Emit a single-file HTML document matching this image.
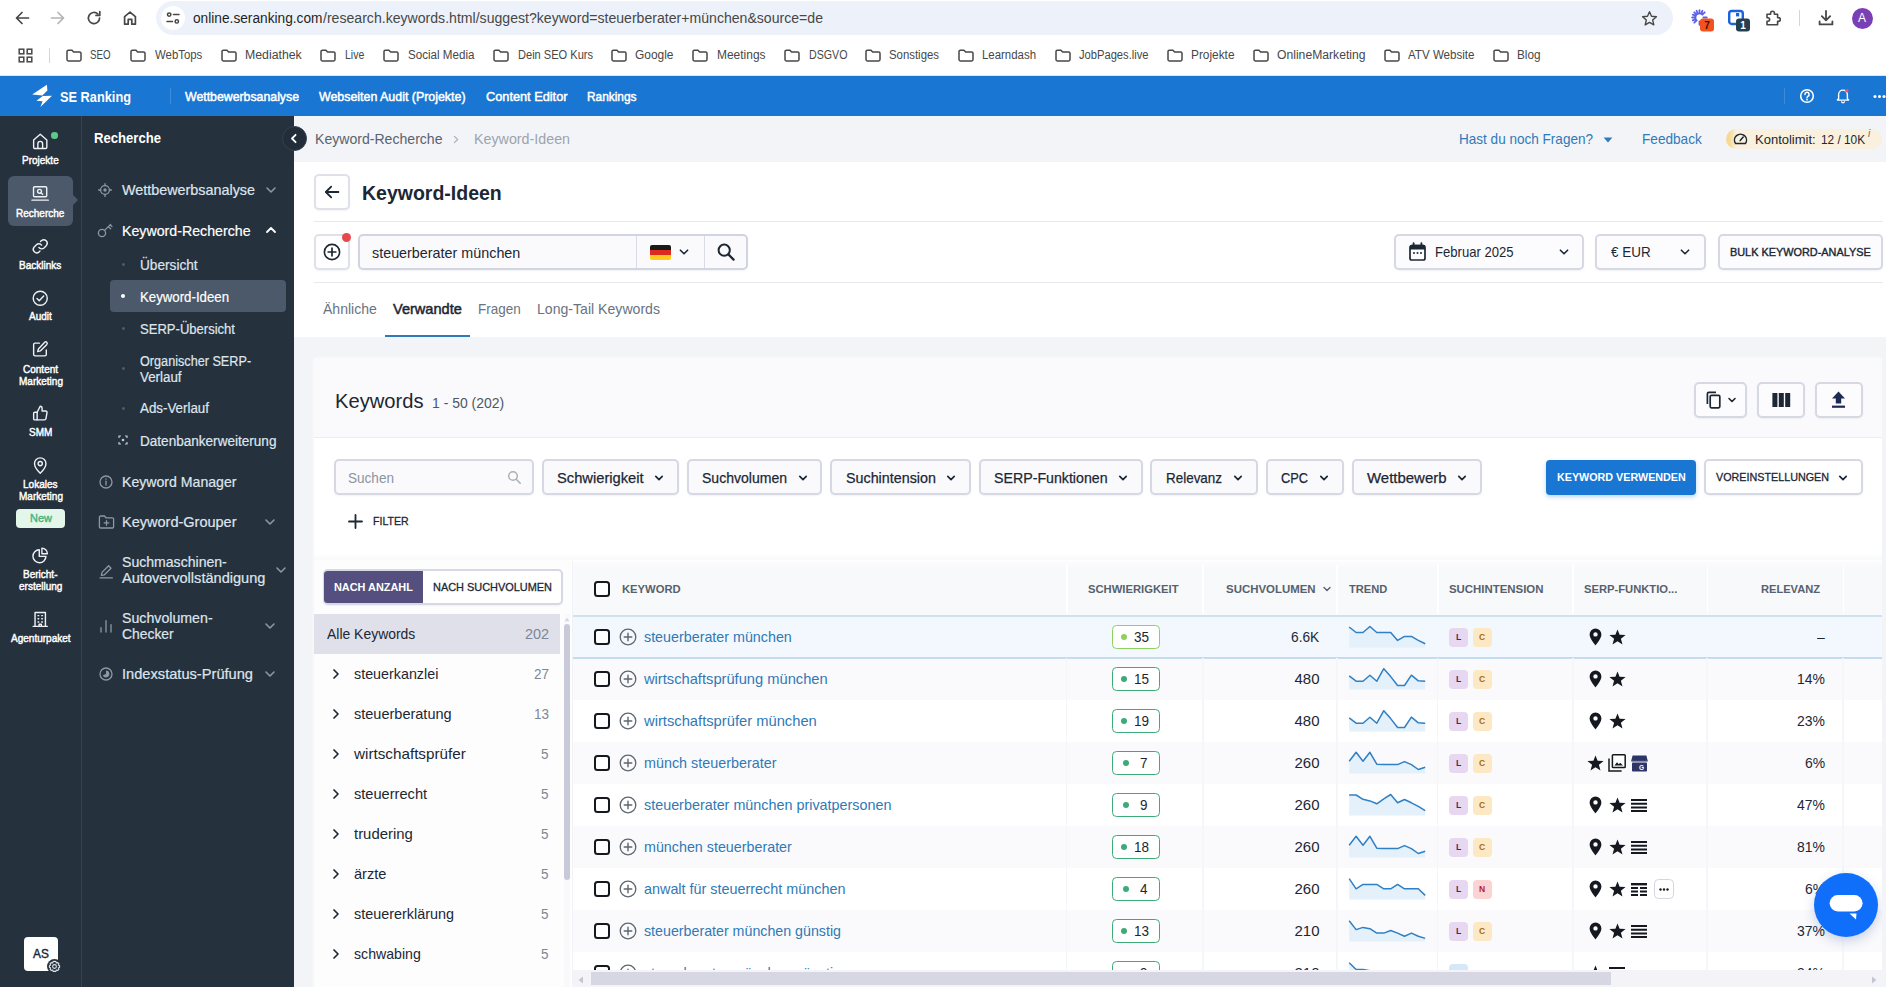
<!DOCTYPE html>
<html lang="de"><head><meta charset="utf-8"><title>Keyword-Ideen – SE Ranking</title><style>
*{box-sizing:border-box;margin:0;padding:0}
html,body{width:1886px;height:987px;overflow:hidden;background:#f3f4f7;font-family:"Liberation Sans",sans-serif;}
body{position:relative}
.t{position:absolute;white-space:nowrap;transform-origin:0 50%;display:block}
svg{display:block;overflow:visible}
.abs{position:absolute}
</style></head><body>
<header id="browser"><div style="position:absolute;left:0px;top:0px;width:1886px;height:76px;background:#ffffff;"></div><div style="position:absolute;left:0px;top:75px;width:1886px;height:1px;background:#dde6f5;"></div><div style="position:absolute;left:156px;top:1px;width:1516.5px;height:34px;background:#edf2fa;border-radius:17px;"></div><div style="position:absolute;left:161px;top:6px;width:24px;height:24px;background:#ffffff;border-radius:12px;"></div><svg style="position:absolute;left:14px;top:10px;" width="16" height="16" viewBox="0 0 16 16"><path d="M14.5 8H2.5M8 2.5L2.5 8L8 13.5" fill="none" stroke="#474747" stroke-width="1.7" stroke-linecap="round" stroke-linejoin="round"/></svg><svg style="position:absolute;left:50px;top:10px;" width="16" height="16" viewBox="0 0 16 16"><path d="M1.5 8H13.5M8 2.5L13.5 8L8 13.5" fill="none" stroke="#b4b4b4" stroke-width="1.7" stroke-linecap="round" stroke-linejoin="round"/></svg><svg style="position:absolute;left:86px;top:10px;" width="16" height="16" viewBox="0 0 16 16"><path d="M13.6 8A5.6 5.6 0 1 1 11.9 4" fill="none" stroke="#474747" stroke-width="1.7" stroke-linecap="round"/><path d="M13.8 1.6V5.4H10" fill="none" stroke="#474747" stroke-width="1.7" stroke-linecap="round" stroke-linejoin="round"/></svg><svg style="position:absolute;left:122px;top:10px;" width="16" height="16" viewBox="0 0 16 16"><path d="M2.6 14.2V6.6L8 2.2L13.4 6.6V14.2H9.8V9.4H6.2V14.2Z" fill="none" stroke="#474747" stroke-width="1.7" stroke-linejoin="round"/></svg><svg style="position:absolute;left:166px;top:11px;" width="14" height="14" viewBox="0 0 14 14"><g fill="none" stroke="#474747" stroke-width="1.5" stroke-linecap="round"><circle cx="3.2" cy="3.6" r="1.7"/><path d="M7.5 3.6H13"/><circle cx="10.8" cy="10.4" r="1.7"/><path d="M1 10.4H6.5"/></g></svg><span class="t" style="left:193.00px;top:11.15px;font-size:14px;line-height:14px;font-weight:400;color:#1f1f1f;transform:scaleX(0.9789);">online.seranking.com</span><span class="t" style="left:322.50px;top:11.15px;font-size:14px;line-height:14px;font-weight:400;color:#474747;transform:scaleX(1.0063);">/research.keywords.html/suggest?keyword=steuerberater+münchen&amp;source=de</span><svg style="position:absolute;left:1641px;top:10px;" width="17" height="17" viewBox="0 0 17 17"><path d="M8.5 1.8L10.5 6.3L15.4 6.8L11.7 10.1L12.8 14.9L8.5 12.4L4.2 14.9L5.3 10.1L1.6 6.8L6.5 6.3Z" fill="none" stroke="#474747" stroke-width="1.4" stroke-linejoin="round"/></svg><svg style="position:absolute;left:1691px;top:8px;" width="24" height="24" viewBox="0 0 24 24"><g stroke="#5b5fe8" stroke-width="1.8" stroke-linecap="round"><path d="M8.5 2.2V5.6M8.5 13.4V16.8M1.2 9.5H4.6M12.4 9.5H15.8M3.3 4.3L5.7 6.7M13.7 4.3L11.3 6.7M3.3 14.7L5.7 12.3M5.6 2.8L6.9 5.9M11.4 2.8L10.1 5.9M1.8 6.6L4.9 7.9M1.8 12.4L4.9 11.1"/></g><rect x="9" y="10.5" width="14" height="13" rx="3" fill="#f4511e"/></svg><span class="t" style="left:1704.22px;top:20.54px;font-size:10px;line-height:10px;font-weight:700;color:#3a1208;">7</span><svg style="position:absolute;left:1727px;top:8px;" width="24" height="24" viewBox="0 0 24 24"><rect x="2.2" y="3" width="13.6" height="13" rx="2.5" fill="#fff" stroke="#1c62d8" stroke-width="2.4"/><rect x="9" y="5" width="3.2" height="3.4" fill="#1c62d8"/><rect x="9" y="10.5" width="14" height="13" rx="3" fill="#24404f"/></svg><span class="t" style="left:1740.22px;top:20.54px;font-size:10px;line-height:10px;font-weight:700;color:#ffffff;">1</span><svg style="position:absolute;left:1764px;top:9px;" width="18" height="18" viewBox="0 0 18 18"><path d="M3 5.2H6.6V4.2A1.9 1.9 0 0 1 10.4 4.2V5.2H13.6V8.6H14.4A1.9 1.9 0 0 1 14.4 12.4H13.6V15.8H3V12.2H3.9A1.7 1.7 0 0 0 3.9 8.8H3Z" fill="none" stroke="#474747" stroke-width="1.6" stroke-linejoin="round"/></svg><div style="position:absolute;left:1798.5px;top:10px;width:1.5px;height:16px;background:#c7d7f2;"></div><svg style="position:absolute;left:1817px;top:9px;" width="18" height="18" viewBox="0 0 18 18"><path d="M9 2V11M4.8 7.2L9 11.4L13.2 7.2M2.6 12.4V15.4H15.4V12.4" fill="none" stroke="#474747" stroke-width="1.8" stroke-linecap="round" stroke-linejoin="round"/></svg><div style="position:absolute;left:1851.5px;top:7.5px;width:21px;height:21px;background:#7b3fb5;border-radius:50%;"></div><span class="t" style="left:1858.00px;top:12.14px;font-size:12px;line-height:12px;font-weight:400;color:#ffffff;">A</span><svg style="position:absolute;left:18px;top:48px;" width="15" height="15" viewBox="0 0 15 15"><g fill="none" stroke="#474747" stroke-width="1.5"><rect x="1.2" y="1.2" width="4.6" height="4.6"/><rect x="9.2" y="1.2" width="4.6" height="4.6"/><rect x="1.2" y="9.2" width="4.6" height="4.6"/><rect x="9.2" y="9.2" width="4.6" height="4.6"/></g></svg><div style="position:absolute;left:48.5px;top:48px;width:1.5px;height:15px;background:#c7d7f2;"></div><svg style="position:absolute;left:66px;top:48.5px;" width="16" height="13" viewBox="0 0 16 13"><path d="M1 2.6A1.4 1.4 0 0 1 2.4 1.2H6L7.6 2.9H13.6A1.4 1.4 0 0 1 15 4.3V10.6A1.4 1.4 0 0 1 13.6 12H2.4A1.4 1.4 0 0 1 1 10.6Z" fill="none" stroke="#474747" stroke-width="1.5" stroke-linejoin="round"/></svg><span class="t" style="left:90.40px;top:49.14px;font-size:12px;line-height:12px;font-weight:400;color:#474747;transform:scaleX(0.8129);">SEO</span><svg style="position:absolute;left:130px;top:48.5px;" width="16" height="13" viewBox="0 0 16 13"><path d="M1 2.6A1.4 1.4 0 0 1 2.4 1.2H6L7.6 2.9H13.6A1.4 1.4 0 0 1 15 4.3V10.6A1.4 1.4 0 0 1 13.6 12H2.4A1.4 1.4 0 0 1 1 10.6Z" fill="none" stroke="#474747" stroke-width="1.5" stroke-linejoin="round"/></svg><span class="t" style="left:154.70px;top:49.14px;font-size:12px;line-height:12px;font-weight:400;color:#474747;transform:scaleX(0.9498);">WebTops</span><svg style="position:absolute;left:221px;top:48.5px;" width="16" height="13" viewBox="0 0 16 13"><path d="M1 2.6A1.4 1.4 0 0 1 2.4 1.2H6L7.6 2.9H13.6A1.4 1.4 0 0 1 15 4.3V10.6A1.4 1.4 0 0 1 13.6 12H2.4A1.4 1.4 0 0 1 1 10.6Z" fill="none" stroke="#474747" stroke-width="1.5" stroke-linejoin="round"/></svg><span class="t" style="left:245.00px;top:49.14px;font-size:12px;line-height:12px;font-weight:400;color:#474747;transform:scaleX(1.0242);">Mediathek</span><svg style="position:absolute;left:319.8px;top:48.5px;" width="16" height="13" viewBox="0 0 16 13"><path d="M1 2.6A1.4 1.4 0 0 1 2.4 1.2H6L7.6 2.9H13.6A1.4 1.4 0 0 1 15 4.3V10.6A1.4 1.4 0 0 1 13.6 12H2.4A1.4 1.4 0 0 1 1 10.6Z" fill="none" stroke="#474747" stroke-width="1.5" stroke-linejoin="round"/></svg><span class="t" style="left:344.70px;top:49.14px;font-size:12px;line-height:12px;font-weight:400;color:#474747;transform:scaleX(0.8768);">Live</span><svg style="position:absolute;left:383px;top:48.5px;" width="16" height="13" viewBox="0 0 16 13"><path d="M1 2.6A1.4 1.4 0 0 1 2.4 1.2H6L7.6 2.9H13.6A1.4 1.4 0 0 1 15 4.3V10.6A1.4 1.4 0 0 1 13.6 12H2.4A1.4 1.4 0 0 1 1 10.6Z" fill="none" stroke="#474747" stroke-width="1.5" stroke-linejoin="round"/></svg><span class="t" style="left:407.50px;top:49.14px;font-size:12px;line-height:12px;font-weight:400;color:#474747;transform:scaleX(0.9680);">Social Media</span><svg style="position:absolute;left:492.5px;top:48.5px;" width="16" height="13" viewBox="0 0 16 13"><path d="M1 2.6A1.4 1.4 0 0 1 2.4 1.2H6L7.6 2.9H13.6A1.4 1.4 0 0 1 15 4.3V10.6A1.4 1.4 0 0 1 13.6 12H2.4A1.4 1.4 0 0 1 1 10.6Z" fill="none" stroke="#474747" stroke-width="1.5" stroke-linejoin="round"/></svg><span class="t" style="left:517.50px;top:49.14px;font-size:12px;line-height:12px;font-weight:400;color:#474747;transform:scaleX(0.9218);">Dein SEO Kurs</span><svg style="position:absolute;left:611px;top:48.5px;" width="16" height="13" viewBox="0 0 16 13"><path d="M1 2.6A1.4 1.4 0 0 1 2.4 1.2H6L7.6 2.9H13.6A1.4 1.4 0 0 1 15 4.3V10.6A1.4 1.4 0 0 1 13.6 12H2.4A1.4 1.4 0 0 1 1 10.6Z" fill="none" stroke="#474747" stroke-width="1.5" stroke-linejoin="round"/></svg><span class="t" style="left:635.00px;top:49.14px;font-size:12px;line-height:12px;font-weight:400;color:#474747;transform:scaleX(0.9950);">Google</span><svg style="position:absolute;left:692px;top:48.5px;" width="16" height="13" viewBox="0 0 16 13"><path d="M1 2.6A1.4 1.4 0 0 1 2.4 1.2H6L7.6 2.9H13.6A1.4 1.4 0 0 1 15 4.3V10.6A1.4 1.4 0 0 1 13.6 12H2.4A1.4 1.4 0 0 1 1 10.6Z" fill="none" stroke="#474747" stroke-width="1.5" stroke-linejoin="round"/></svg><span class="t" style="left:716.50px;top:49.14px;font-size:12px;line-height:12px;font-weight:400;color:#474747;transform:scaleX(0.9961);">Meetings</span><svg style="position:absolute;left:784px;top:48.5px;" width="16" height="13" viewBox="0 0 16 13"><path d="M1 2.6A1.4 1.4 0 0 1 2.4 1.2H6L7.6 2.9H13.6A1.4 1.4 0 0 1 15 4.3V10.6A1.4 1.4 0 0 1 13.6 12H2.4A1.4 1.4 0 0 1 1 10.6Z" fill="none" stroke="#474747" stroke-width="1.5" stroke-linejoin="round"/></svg><span class="t" style="left:808.50px;top:49.14px;font-size:12px;line-height:12px;font-weight:400;color:#474747;transform:scaleX(0.8883);">DSGVO</span><svg style="position:absolute;left:865px;top:48.5px;" width="16" height="13" viewBox="0 0 16 13"><path d="M1 2.6A1.4 1.4 0 0 1 2.4 1.2H6L7.6 2.9H13.6A1.4 1.4 0 0 1 15 4.3V10.6A1.4 1.4 0 0 1 13.6 12H2.4A1.4 1.4 0 0 1 1 10.6Z" fill="none" stroke="#474747" stroke-width="1.5" stroke-linejoin="round"/></svg><span class="t" style="left:889.00px;top:49.14px;font-size:12px;line-height:12px;font-weight:400;color:#474747;transform:scaleX(0.9488);">Sonstiges</span><svg style="position:absolute;left:958px;top:48.5px;" width="16" height="13" viewBox="0 0 16 13"><path d="M1 2.6A1.4 1.4 0 0 1 2.4 1.2H6L7.6 2.9H13.6A1.4 1.4 0 0 1 15 4.3V10.6A1.4 1.4 0 0 1 13.6 12H2.4A1.4 1.4 0 0 1 1 10.6Z" fill="none" stroke="#474747" stroke-width="1.5" stroke-linejoin="round"/></svg><span class="t" style="left:982.00px;top:49.14px;font-size:12px;line-height:12px;font-weight:400;color:#474747;transform:scaleX(0.9523);">Learndash</span><svg style="position:absolute;left:1054.5px;top:48.5px;" width="16" height="13" viewBox="0 0 16 13"><path d="M1 2.6A1.4 1.4 0 0 1 2.4 1.2H6L7.6 2.9H13.6A1.4 1.4 0 0 1 15 4.3V10.6A1.4 1.4 0 0 1 13.6 12H2.4A1.4 1.4 0 0 1 1 10.6Z" fill="none" stroke="#474747" stroke-width="1.5" stroke-linejoin="round"/></svg><span class="t" style="left:1079.00px;top:49.14px;font-size:12px;line-height:12px;font-weight:400;color:#474747;transform:scaleX(0.9303);">JobPages.live</span><svg style="position:absolute;left:1166.5px;top:48.5px;" width="16" height="13" viewBox="0 0 16 13"><path d="M1 2.6A1.4 1.4 0 0 1 2.4 1.2H6L7.6 2.9H13.6A1.4 1.4 0 0 1 15 4.3V10.6A1.4 1.4 0 0 1 13.6 12H2.4A1.4 1.4 0 0 1 1 10.6Z" fill="none" stroke="#474747" stroke-width="1.5" stroke-linejoin="round"/></svg><span class="t" style="left:1191.00px;top:49.14px;font-size:12px;line-height:12px;font-weight:400;color:#474747;transform:scaleX(0.9882);">Projekte</span><svg style="position:absolute;left:1253px;top:48.5px;" width="16" height="13" viewBox="0 0 16 13"><path d="M1 2.6A1.4 1.4 0 0 1 2.4 1.2H6L7.6 2.9H13.6A1.4 1.4 0 0 1 15 4.3V10.6A1.4 1.4 0 0 1 13.6 12H2.4A1.4 1.4 0 0 1 1 10.6Z" fill="none" stroke="#474747" stroke-width="1.5" stroke-linejoin="round"/></svg><span class="t" style="left:1277.00px;top:49.14px;font-size:12px;line-height:12px;font-weight:400;color:#474747;transform:scaleX(1.0129);">OnlineMarketing</span><svg style="position:absolute;left:1384px;top:48.5px;" width="16" height="13" viewBox="0 0 16 13"><path d="M1 2.6A1.4 1.4 0 0 1 2.4 1.2H6L7.6 2.9H13.6A1.4 1.4 0 0 1 15 4.3V10.6A1.4 1.4 0 0 1 13.6 12H2.4A1.4 1.4 0 0 1 1 10.6Z" fill="none" stroke="#474747" stroke-width="1.5" stroke-linejoin="round"/></svg><span class="t" style="left:1408.00px;top:49.14px;font-size:12px;line-height:12px;font-weight:400;color:#474747;transform:scaleX(0.9650);">ATV Website</span><svg style="position:absolute;left:1493px;top:48.5px;" width="16" height="13" viewBox="0 0 16 13"><path d="M1 2.6A1.4 1.4 0 0 1 2.4 1.2H6L7.6 2.9H13.6A1.4 1.4 0 0 1 15 4.3V10.6A1.4 1.4 0 0 1 13.6 12H2.4A1.4 1.4 0 0 1 1 10.6Z" fill="none" stroke="#474747" stroke-width="1.5" stroke-linejoin="round"/></svg><span class="t" style="left:1517.00px;top:49.14px;font-size:12px;line-height:12px;font-weight:400;color:#474747;transform:scaleX(0.9785);">Blog</span></header>
<header id="appbar"><div style="position:absolute;left:0px;top:76px;width:1886px;height:40px;background:#1976d2;"></div><svg style="position:absolute;left:31px;top:84px;" width="22" height="24" viewBox="0 0 22 24"><path d="M15.9 0.8L1.2 10.4L11.4 11.4L16.4 6.6Z" fill="#fff"/><path d="M21 11.7L11.8 11.9L5.4 16.8L11.6 17.2L9.4 23Z" fill="#fff"/></svg><span class="t" style="left:60.00px;top:88.80px;font-size:15px;line-height:15px;font-weight:700;color:#ffffff;transform:scaleX(0.8519);">SE Ranking</span><div style="position:absolute;left:169.5px;top:87.5px;width:1px;height:16px;background:#3f8bdb;"></div><span class="t" style="left:184.50px;top:89.57px;font-size:13.5px;line-height:13.5px;font-weight:400;color:#ffffff;transform:scaleX(0.9116);-webkit-text-stroke:0.5px #ffffff;">Wettbewerbsanalyse</span><span class="t" style="left:319.00px;top:89.57px;font-size:13.5px;line-height:13.5px;font-weight:400;color:#ffffff;transform:scaleX(0.9181);-webkit-text-stroke:0.5px #ffffff;">Webseiten Audit (Projekte)</span><span class="t" style="left:485.50px;top:89.57px;font-size:13.5px;line-height:13.5px;font-weight:400;color:#ffffff;transform:scaleX(0.9444);-webkit-text-stroke:0.5px #ffffff;">Content Editor</span><span class="t" style="left:587.00px;top:89.57px;font-size:13.5px;line-height:13.5px;font-weight:400;color:#ffffff;transform:scaleX(0.8796);-webkit-text-stroke:0.5px #ffffff;">Rankings</span><div style="position:absolute;left:1784px;top:87.5px;width:1px;height:16px;background:#3f8bdb;"></div><svg style="position:absolute;left:1799px;top:88px;" width="16" height="16" viewBox="0 0 16 16"><circle cx="8" cy="8" r="6.3" fill="none" stroke="#fff" stroke-width="1.6"/><path d="M5.9 6.4A2.1 2.1 0 1 1 8.9 8.3C8.2 8.7 8 9 8 9.8" fill="none" stroke="#fff" stroke-width="1.5" stroke-linecap="round"/><circle cx="8" cy="11.7" r="0.9" fill="#fff"/></svg><svg style="position:absolute;left:1836px;top:88.4px;" width="14" height="15.75" viewBox="0 0 16 18"><path d="M3 12.2V7.4A5 5 0 0 1 13 7.4V12.2L14.4 13.8H1.6Z" fill="none" stroke="#fff" stroke-width="1.6" stroke-linejoin="round"/><path d="M6.4 15.8A1.7 1.7 0 0 0 9.6 15.8" fill="none" stroke="#fff" stroke-width="1.5" stroke-linecap="round"/><circle cx="12.4" cy="3.2" r="2" fill="#f0506e"/></svg><svg style="position:absolute;left:1873px;top:94px;" width="14" height="5" viewBox="0 0 14 5"><circle cx="2" cy="2.5" r="1.5" fill="#fff"/><circle cx="6.5" cy="2.5" r="1.5" fill="#fff"/><circle cx="11" cy="2.5" r="1.5" fill="#fff"/></svg></header>
<nav id="sidebar"><div style="position:absolute;left:0px;top:116px;width:294px;height:871px;background:#26313e;"></div><div style="position:absolute;left:81px;top:116px;width:1px;height:871px;background:#384350;"></div><div style="position:absolute;left:8px;top:176px;width:65px;height:50px;background:#4b596a;border-radius:6px;"></div><svg style="position:absolute;left:72px;top:194px;" width="6" height="12" viewBox="0 0 6 12"><path d="M0 0L6 6L0 12Z" fill="#4b596a"/></svg><svg style="position:absolute;left:31.259999999999998px;top:132.26px;" width="18.48" height="18.48" viewBox="0 0 21 21"><path d="M3 9.2L10.5 2.6L18 9.2V17.4A1.4 1.4 0 0 1 16.6 18.8H4.4A1.4 1.4 0 0 1 3 17.4Z" fill="none" stroke="#eef1f5" stroke-width="1.6" stroke-linecap="round" stroke-linejoin="round"/><path d="M7.8 18.6V13.4A2.7 2.7 0 0 1 13.2 13.4V18.6" fill="none" stroke="#eef1f5" stroke-width="1.6" stroke-linecap="round" stroke-linejoin="round"/></svg><div style="position:absolute;left:51px;top:132px;width:6.5px;height:6.5px;background:#5dc98b;border-radius:50%;"></div><span class="t" style="left:22.14px;top:155.49px;font-size:11px;line-height:11px;font-weight:400;color:#ffffff;transform:scaleX(0.9100);-webkit-text-stroke:0.45px #ffffff;">Projekte</span><svg style="position:absolute;left:30.380000000000003px;top:185.26px;" width="20.24" height="18.48" viewBox="0 0 23 21"><rect x="4" y="2" width="15" height="11.4" rx="1.2" fill="none" stroke="#eef1f5" stroke-width="1.6" stroke-linecap="round" stroke-linejoin="round"/><path d="M2.2 17.2H20.8" fill="none" stroke="#eef1f5" stroke-width="1.6" stroke-linecap="round" stroke-linejoin="round"/><circle cx="10.8" cy="7.2" r="2.2" fill="none" stroke="#eef1f5" stroke-width="1.6" stroke-linecap="round" stroke-linejoin="round" stroke-width="1.4"/><path d="M12.6 9L14.4 10.6" fill="none" stroke="#eef1f5" stroke-width="1.6" stroke-linecap="round" stroke-linejoin="round" stroke-width="1.4"/></svg><span class="t" style="left:16.30px;top:207.69px;font-size:11px;line-height:11px;font-weight:400;color:#ffffff;transform:scaleX(0.9100);-webkit-text-stroke:0.45px #ffffff;">Recherche</span><svg style="position:absolute;left:31.259999999999998px;top:237.26px;" width="18.48" height="18.48" viewBox="0 0 21 21"><path d="M9 12A4 4 0 0 0 14.8 12.4L17.6 9.6A4 4 0 0 0 12 4L10.8 5.2" fill="none" stroke="#eef1f5" stroke-width="1.6" stroke-linecap="round" stroke-linejoin="round"/><path d="M12 9.2A4 4 0 0 0 6.2 8.8L3.4 11.6A4 4 0 0 0 9 17.2L10.2 16" fill="none" stroke="#eef1f5" stroke-width="1.6" stroke-linecap="round" stroke-linejoin="round"/></svg><span class="t" style="left:19.36px;top:259.69px;font-size:11px;line-height:11px;font-weight:400;color:#ffffff;transform:scaleX(0.9100);-webkit-text-stroke:0.45px #ffffff;">Backlinks</span><svg style="position:absolute;left:31.259999999999998px;top:289.26px;" width="18.48" height="18.48" viewBox="0 0 21 21"><circle cx="10.5" cy="10.5" r="8" fill="none" stroke="#eef1f5" stroke-width="1.6" stroke-linecap="round" stroke-linejoin="round"/><path d="M6.8 10.8L9.4 13.4L14.4 8" fill="none" stroke="#eef1f5" stroke-width="1.6" stroke-linecap="round" stroke-linejoin="round"/></svg><span class="t" style="left:29.09px;top:311.29px;font-size:11px;line-height:11px;font-weight:400;color:#ffffff;transform:scaleX(0.9100);-webkit-text-stroke:0.45px #ffffff;">Audit</span><svg style="position:absolute;left:31.259999999999998px;top:340.26px;" width="18.48" height="18.48" viewBox="0 0 21 21"><path d="M9.6 3.6H4.6A1.6 1.6 0 0 0 3 5.2V16.4A1.6 1.6 0 0 0 4.6 18H15.8A1.6 1.6 0 0 0 17.4 16.4V11.4" fill="none" stroke="#eef1f5" stroke-width="1.6" stroke-linecap="round" stroke-linejoin="round"/><path d="M15.6 2.6A1.7 1.7 0 0 1 18 5L10.6 12.4L7.6 13.2L8.4 10.2Z" fill="none" stroke="#eef1f5" stroke-width="1.6" stroke-linecap="round" stroke-linejoin="round"/></svg><span class="t" style="left:22.97px;top:363.69px;font-size:11px;line-height:11px;font-weight:400;color:#ffffff;transform:scaleX(0.9100);-webkit-text-stroke:0.45px #ffffff;">Content</span><span class="t" style="left:18.53px;top:375.69px;font-size:11px;line-height:11px;font-weight:400;color:#ffffff;transform:scaleX(0.9100);-webkit-text-stroke:0.45px #ffffff;">Marketing</span><svg style="position:absolute;left:31.259999999999998px;top:404.26px;" width="18.48" height="18.48" viewBox="0 0 21 21"><path d="M7 9.4V18H4.2A1.2 1.2 0 0 1 3 16.8V10.6A1.2 1.2 0 0 1 4.2 9.4Z" fill="none" stroke="#eef1f5" stroke-width="1.6" stroke-linecap="round" stroke-linejoin="round"/><path d="M7 9.4L10.4 2.6A2.2 2.2 0 0 1 12.6 4.8V8H16.6A1.6 1.6 0 0 1 18.2 9.9L17 16.6A1.7 1.7 0 0 1 15.3 18H7" fill="none" stroke="#eef1f5" stroke-width="1.6" stroke-linecap="round" stroke-linejoin="round"/></svg><span class="t" style="left:28.82px;top:427.09px;font-size:11px;line-height:11px;font-weight:400;color:#ffffff;transform:scaleX(0.9100);-webkit-text-stroke:0.45px #ffffff;">SMM</span><svg style="position:absolute;left:31.259999999999998px;top:456.32px;" width="18.48" height="19.36" viewBox="0 0 21 22"><path d="M10.5 19.6C10.5 19.6 4 13.6 4 8.6A6.5 6.5 0 0 1 17 8.6C17 13.6 10.5 19.6 10.5 19.6Z" fill="none" stroke="#eef1f5" stroke-width="1.6" stroke-linecap="round" stroke-linejoin="round"/><circle cx="10.5" cy="8.6" r="2.4" fill="none" stroke="#eef1f5" stroke-width="1.6" stroke-linecap="round" stroke-linejoin="round"/></svg><span class="t" style="left:23.25px;top:478.89px;font-size:11px;line-height:11px;font-weight:400;color:#ffffff;transform:scaleX(0.9100);-webkit-text-stroke:0.45px #ffffff;">Lokales</span><span class="t" style="left:18.53px;top:490.89px;font-size:11px;line-height:11px;font-weight:400;color:#ffffff;transform:scaleX(0.9100);-webkit-text-stroke:0.45px #ffffff;">Marketing</span><div style="position:absolute;left:16px;top:508.5px;width:49px;height:19px;background:#e2f6ea;border-radius:4px;"></div><span class="t" style="left:29.57px;top:512.87px;font-size:11.5px;line-height:11.5px;font-weight:400;color:#45b27c;transform:scaleX(0.9500);-webkit-text-stroke:0.4px #45b27c;">New</span><svg style="position:absolute;left:31.259999999999998px;top:546.26px;" width="18.48" height="18.48" viewBox="0 0 21 21"><path d="M9.4 4.2A7.4 7.4 0 1 0 17 11.8H9.4Z" fill="none" stroke="#eef1f5" stroke-width="1.6" stroke-linecap="round" stroke-linejoin="round"/><path d="M12.4 2.4V8.8H18.6A6.4 6.4 0 0 0 12.4 2.4Z" fill="none" stroke="#eef1f5" stroke-width="1.6" stroke-linecap="round" stroke-linejoin="round"/></svg><span class="t" style="left:23.26px;top:568.89px;font-size:11px;line-height:11px;font-weight:400;color:#ffffff;transform:scaleX(0.9100);-webkit-text-stroke:0.45px #ffffff;">Bericht-</span><span class="t" style="left:18.80px;top:580.89px;font-size:11px;line-height:11px;font-weight:400;color:#ffffff;transform:scaleX(0.9100);-webkit-text-stroke:0.45px #ffffff;">erstellung</span><svg style="position:absolute;left:31.259999999999998px;top:610.26px;" width="18.48" height="18.48" viewBox="0 0 21 21"><path d="M4.6 18.6V2.8H16.4V18.6M2.4 18.6H18.6" fill="none" stroke="#eef1f5" stroke-width="1.6" stroke-linecap="round" stroke-linejoin="round"/><path d="M8 6.4H8.8M12.2 6.4H13M8 10H8.8M12.2 10H13M8 13.6H8.8M12.2 13.6H13" fill="none" stroke="#eef1f5" stroke-width="1.6" stroke-linecap="round" stroke-linejoin="round" stroke-width="1.8"/><path d="M9.2 18.4V16.2H11.8V18.4" fill="none" stroke="#eef1f5" stroke-width="1.6" stroke-linecap="round" stroke-linejoin="round" stroke-width="1.3"/></svg><span class="t" style="left:10.73px;top:633.09px;font-size:11px;line-height:11px;font-weight:400;color:#ffffff;transform:scaleX(0.9100);-webkit-text-stroke:0.45px #ffffff;">Agenturpaket</span><div style="position:absolute;left:24px;top:936.6px;width:34px;height:34px;background:#ffffff;border-radius:4px;"></div><span class="t" style="left:32.78px;top:947.62px;font-size:12.5px;line-height:12.5px;font-weight:400;color:#1c2733;transform:scaleX(0.9500);-webkit-text-stroke:0.4px #1c2733;">AS</span><div style="position:absolute;left:46.5px;top:959px;width:15px;height:15px;background:#26313e;border-radius:50%;"></div><svg style="position:absolute;left:47.5px;top:960px;" width="13" height="13" viewBox="0 0 13 13"><path d="M6.5 1.2L7.9 1.6L8.3 3L9.8 2.6L10.9 3.7L10.3 5.1L11.6 5.8V7.2L10.3 7.9L10.9 9.3L9.8 10.4L8.3 10L7.9 11.4H5.1L4.7 10L3.2 10.4L2.1 9.3L2.7 7.9L1.4 7.2V5.8L2.7 5.1L2.1 3.7L3.2 2.6L4.7 3L5.1 1.6Z" fill="none" stroke="#dfe4ea" stroke-width="1.1" stroke-linejoin="round"/><circle cx="6.5" cy="6.5" r="1.9" fill="none" stroke="#dfe4ea" stroke-width="1.1"/></svg><span class="t" style="left:94.00px;top:130.30px;font-size:15px;line-height:15px;font-weight:700;color:#ffffff;transform:scaleX(0.8735);">Recherche</span><div style="position:absolute;left:281.5px;top:126px;width:25px;height:25px;background:#232d39;border-radius:50%;border:1px solid #36414e;"></div><svg style="position:absolute;left:289px;top:133px;" width="10" height="11" viewBox="0 0 10 11"><path d="M6.6 1.8L3 5.5L6.6 9.2" fill="none" stroke="#fff" stroke-width="1.8" stroke-linecap="round" stroke-linejoin="round"/></svg><svg style="position:absolute;left:97px;top:182px;" width="16" height="16" viewBox="0 0 16 16"><circle cx="8" cy="8" r="4.4" fill="none" stroke="#8d98a6" stroke-width="1.3" stroke-linecap="round" stroke-linejoin="round"/><circle cx="8" cy="8" r="1.7" fill="#8d98a6"/><path d="M8 1.6V3.6M8 12.4V14.4M1.6 8H3.6M12.4 8H14.4" fill="none" stroke="#8d98a6" stroke-width="1.3" stroke-linecap="round" stroke-linejoin="round"/></svg><span class="t" style="left:122.00px;top:182.30px;font-size:15px;line-height:15px;font-weight:400;color:#dfe5ec;transform:scaleX(0.9572);-webkit-text-stroke:0.2px #dfe5ec;">Wettbewerbsanalyse</span><svg style="position:absolute;left:265px;top:184px;" width="12" height="12" viewBox="0 0 12 12"><path d="M-4 -2.0L0 2.0L4 -2.0" transform="translate(6,6)" fill="none" stroke="#8d98a6" stroke-width="1.6" stroke-linecap="round" stroke-linejoin="round"/></svg><svg style="position:absolute;left:97px;top:222px;" width="16" height="16" viewBox="0 0 16 16"><circle cx="5" cy="11" r="3.6" fill="none" stroke="#8d98a6" stroke-width="1.3" stroke-linecap="round" stroke-linejoin="round"/><path d="M7.6 8.4L13.6 2.4M11.4 4.6L13.6 6.8M13.2 2.8L15 4.6" fill="none" stroke="#8d98a6" stroke-width="1.3" stroke-linecap="round" stroke-linejoin="round"/></svg><span class="t" style="left:122.00px;top:222.90px;font-size:15px;line-height:15px;font-weight:400;color:#ffffff;transform:scaleX(0.9464);-webkit-text-stroke:0.2px #ffffff;">Keyword-Recherche</span><svg style="position:absolute;left:265px;top:224px;" width="12" height="12" viewBox="0 0 12 12"><path d="M-4 2.0L0 -2.0L4 2.0" transform="translate(6,6)" fill="none" stroke="#ffffff" stroke-width="1.8" stroke-linecap="round" stroke-linejoin="round"/></svg><div style="position:absolute;left:110px;top:280px;width:176px;height:32px;background:#4b596a;border-radius:4px;"></div><div style="position:absolute;left:121.5px;top:262.5px;width:3.0px;height:3.0px;background:#4f5b6a;border-radius:50%;"></div><span class="t" style="left:140.00px;top:257.85px;font-size:14px;line-height:14px;font-weight:400;color:#dfe5ec;transform:scaleX(0.9742);-webkit-text-stroke:0.2px #dfe5ec;">Übersicht</span><div style="position:absolute;left:121px;top:294px;width:4px;height:4px;background:#ffffff;border-radius:50%;"></div><span class="t" style="left:140.00px;top:289.85px;font-size:14px;line-height:14px;font-weight:400;color:#ffffff;transform:scaleX(0.9452);-webkit-text-stroke:0.2px #ffffff;">Keyword-Ideen</span><div style="position:absolute;left:121.5px;top:326.5px;width:3.0px;height:3.0px;background:#4f5b6a;border-radius:50%;"></div><span class="t" style="left:140.00px;top:321.65px;font-size:14px;line-height:14px;font-weight:400;color:#dfe5ec;transform:scaleX(0.9321);-webkit-text-stroke:0.2px #dfe5ec;">SERP-Übersicht</span><div style="position:absolute;left:121.5px;top:366.5px;width:3.0px;height:3.0px;background:#4f5b6a;border-radius:50%;"></div><span class="t" style="left:139.50px;top:353.85px;font-size:14px;line-height:14px;font-weight:400;color:#dfe5ec;transform:scaleX(0.9038);-webkit-text-stroke:0.2px #dfe5ec;">Organischer SERP-</span><span class="t" style="left:139.50px;top:369.55px;font-size:14px;line-height:14px;font-weight:400;color:#dfe5ec;transform:scaleX(0.9522);-webkit-text-stroke:0.2px #dfe5ec;">Verlauf</span><div style="position:absolute;left:121.5px;top:406.5px;width:3.0px;height:3.0px;background:#4f5b6a;border-radius:50%;"></div><span class="t" style="left:140.00px;top:401.15px;font-size:14px;line-height:14px;font-weight:400;color:#dfe5ec;transform:scaleX(0.9534);-webkit-text-stroke:0.2px #dfe5ec;">Ads-Verlauf</span><svg style="position:absolute;left:118px;top:435px;" width="10" height="10" viewBox="0 0 10 10"><path d="M1 3V1H3M7 1H9V3M9 7V9H7M3 9H1V7" fill="none" stroke="#c5ccd5" stroke-width="1.2"/><circle cx="5" cy="5" r="1.3" fill="#c5ccd5"/></svg><span class="t" style="left:140.00px;top:433.55px;font-size:14px;line-height:14px;font-weight:400;color:#dfe5ec;transform:scaleX(0.9684);-webkit-text-stroke:0.2px #dfe5ec;">Datenbankerweiterung</span><svg style="position:absolute;left:98px;top:474px;" width="16" height="16" viewBox="0 0 16 16"><circle cx="8" cy="8" r="6" fill="none" stroke="#8d98a6" stroke-width="1.3" stroke-linecap="round" stroke-linejoin="round"/><path d="M8 7.2V11" fill="none" stroke="#8d98a6" stroke-width="1.3" stroke-linecap="round" stroke-linejoin="round"/><circle cx="8" cy="5" r="0.8" fill="#8d98a6"/></svg><span class="t" style="left:122.00px;top:474.00px;font-size:15px;line-height:15px;font-weight:400;color:#dfe5ec;transform:scaleX(0.9407);-webkit-text-stroke:0.2px #dfe5ec;">Keyword Manager</span><svg style="position:absolute;left:97.5px;top:514px;" width="17" height="16" viewBox="0 0 17 16"><path d="M1.4 3.2A1.2 1.2 0 0 1 2.6 2H6.4L8 3.8H14.4A1.2 1.2 0 0 1 15.6 5V12.8A1.2 1.2 0 0 1 14.4 14H2.6A1.2 1.2 0 0 1 1.4 12.8Z" fill="none" stroke="#8d98a6" stroke-width="1.3" stroke-linecap="round" stroke-linejoin="round"/><path d="M8.5 6.6V11.2M6.2 8.9H10.8" fill="none" stroke="#8d98a6" stroke-width="1.3" stroke-linecap="round" stroke-linejoin="round"/></svg><span class="t" style="left:122.00px;top:514.20px;font-size:15px;line-height:15px;font-weight:400;color:#dfe5ec;transform:scaleX(0.9673);-webkit-text-stroke:0.2px #dfe5ec;">Keyword-Grouper</span><svg style="position:absolute;left:263.5px;top:516px;" width="12" height="12" viewBox="0 0 12 12"><path d="M-4 -2.0L0 2.0L4 -2.0" transform="translate(6,6)" fill="none" stroke="#8d98a6" stroke-width="1.6" stroke-linecap="round" stroke-linejoin="round"/></svg><svg style="position:absolute;left:97.5px;top:562px;" width="16" height="17" viewBox="0 0 16 17"><path d="M4 10.4L10.6 3.8L13 6.2L6.4 12.8L3.4 13.4Z" fill="none" stroke="#8d98a6" stroke-width="1.3" stroke-linecap="round" stroke-linejoin="round"/><path d="M2 15.8H14.4" fill="none" stroke="#8d98a6" stroke-width="1.3" stroke-linecap="round" stroke-linejoin="round"/></svg><span class="t" style="left:122.00px;top:554.10px;font-size:15px;line-height:15px;font-weight:400;color:#dfe5ec;transform:scaleX(0.9381);-webkit-text-stroke:0.2px #dfe5ec;">Suchmaschinen-</span><span class="t" style="left:122.00px;top:570.40px;font-size:15px;line-height:15px;font-weight:400;color:#dfe5ec;transform:scaleX(0.9716);-webkit-text-stroke:0.2px #dfe5ec;">Autovervollständigung</span><svg style="position:absolute;left:275px;top:564px;" width="12" height="12" viewBox="0 0 12 12"><path d="M-4 -2.0L0 2.0L4 -2.0" transform="translate(6,6)" fill="none" stroke="#8d98a6" stroke-width="1.6" stroke-linecap="round" stroke-linejoin="round"/></svg><svg style="position:absolute;left:98px;top:618px;" width="16" height="16" viewBox="0 0 16 16"><path d="M3 14V9.6M8 14V2.6M13 14V6.6" fill="none" stroke="#8d98a6" stroke-width="1.3" stroke-linecap="round" stroke-linejoin="round" stroke-width="1.6"/></svg><span class="t" style="left:122.00px;top:610.00px;font-size:15px;line-height:15px;font-weight:400;color:#dfe5ec;transform:scaleX(0.9450);-webkit-text-stroke:0.2px #dfe5ec;">Suchvolumen-</span><span class="t" style="left:122.00px;top:626.30px;font-size:15px;line-height:15px;font-weight:400;color:#dfe5ec;transform:scaleX(0.9257);-webkit-text-stroke:0.2px #dfe5ec;">Checker</span><svg style="position:absolute;left:263.5px;top:620px;" width="12" height="12" viewBox="0 0 12 12"><path d="M-4 -2.0L0 2.0L4 -2.0" transform="translate(6,6)" fill="none" stroke="#8d98a6" stroke-width="1.6" stroke-linecap="round" stroke-linejoin="round"/></svg><svg style="position:absolute;left:98px;top:666px;" width="16" height="16" viewBox="0 0 16 16"><circle cx="8" cy="8" r="6" fill="none" stroke="#8d98a6" stroke-width="1.3" stroke-linecap="round" stroke-linejoin="round"/><path d="M8 4.6A3.4 3.4 0 1 1 4.8 9.2L8 8Z" fill="#8d98a6"/></svg><span class="t" style="left:122.00px;top:665.70px;font-size:15px;line-height:15px;font-weight:400;color:#dfe5ec;transform:scaleX(0.9759);-webkit-text-stroke:0.2px #dfe5ec;">Indexstatus-Prüfung</span><svg style="position:absolute;left:263.5px;top:668px;" width="12" height="12" viewBox="0 0 12 12"><path d="M-4 -2.0L0 2.0L4 -2.0" transform="translate(6,6)" fill="none" stroke="#8d98a6" stroke-width="1.6" stroke-linecap="round" stroke-linejoin="round"/></svg></nav>
<main id="main"><span class="t" style="left:314.50px;top:130.90px;font-size:15px;line-height:15px;font-weight:400;color:#59636f;transform:scaleX(0.9383);">Keyword-Recherche</span><svg style="position:absolute;left:452px;top:134.5px;" width="8" height="9" viewBox="0 0 8 9"><path d="M2.4 1.4L5.6 4.5L2.4 7.6" fill="none" stroke="#aab2bc" stroke-width="1.3" stroke-linecap="round" stroke-linejoin="round"/></svg><span class="t" style="left:474.00px;top:130.90px;font-size:15px;line-height:15px;font-weight:400;color:#9ba4ae;transform:scaleX(0.9516);">Keyword-Ideen</span><span class="t" style="left:1459.00px;top:131.30px;font-size:15px;line-height:15px;font-weight:400;color:#2f7ab8;transform:scaleX(0.9029);">Hast du noch Fragen?</span><svg style="position:absolute;left:1603px;top:136.5px;" width="10" height="6" viewBox="0 0 10 6"><path d="M0.6 0.6H9.4L5 5.4Z" fill="#2f7ab8"/></svg><span class="t" style="left:1641.70px;top:131.30px;font-size:15px;line-height:15px;font-weight:400;color:#2f7ab8;transform:scaleX(0.9079);">Feedback</span><div style="position:absolute;left:1725.5px;top:128.5px;width:156px;height:20.5px;background:#f9f1de;border-radius:10.25px;overflow:hidden;"><div style="position:absolute;left:0px;top:0px;width:10px;height:21px;background:linear-gradient(90deg,#f6da93 0,#f6da93 35%,#f9f1de 100%);"></div></div><svg style="position:absolute;left:1733px;top:132px;" width="15" height="14" viewBox="0 0 15 14"><path d="M2.6 11.6A6 6 0 1 1 12.4 11.6Z" fill="none" stroke="#1c2733" stroke-width="1.5" stroke-linejoin="round"/><path d="M7.2 8.6L10.2 5" stroke="#1c2733" stroke-width="1.5" stroke-linecap="round"/></svg><span class="t" style="left:1755.00px;top:133.00px;font-size:13px;line-height:13px;font-weight:400;color:#1c2733;">Kontolimit:</span><span class="t" style="left:1821.00px;top:133.00px;font-size:13px;line-height:13px;font-weight:400;color:#1c2733;transform:scaleX(0.9087);">12 / 10K</span><span class="t" style="left:1868.00px;top:129.03px;font-size:10px;line-height:10px;font-weight:400;color:#59636f;font-style:italic;">i</span><div style="position:absolute;left:294px;top:162px;width:1592px;height:175.2px;background:#ffffff;"></div><div style="position:absolute;left:314.25px;top:174.25px;width:35.5px;height:35.5px;background:#ffffff;border:2px solid #dfe0ea;border-radius:5px;box-shadow:0 1px 2px rgba(40,50,80,.06);"></div><svg style="position:absolute;left:323px;top:183px;" width="18" height="18" viewBox="0 0 18 18"><path d="M15.4 9H3M8.2 3.6L2.8 9L8.2 14.4" fill="none" stroke="#1c2733" stroke-width="1.8" stroke-linecap="round" stroke-linejoin="round"/></svg><h1 class="t" style="left:362.00px;top:183.69px;font-size:19.5px;line-height:19.5px;font-weight:700;color:#1c2733;">Keyword-Ideen</h1><div style="position:absolute;left:314px;top:221px;width:1568.7px;height:1px;background:#e6e8ee;"></div><div style="position:absolute;left:314.25px;top:234.25px;width:35.5px;height:35.5px;background:#ffffff;border:2px solid #dfe0ea;border-radius:5px;box-shadow:0 1px 2px rgba(40,50,80,.06);"></div><svg style="position:absolute;left:323px;top:243px;" width="18" height="18" viewBox="0 0 18 18"><circle cx="9" cy="9" r="7.6" fill="none" stroke="#1c2733" stroke-width="1.6"/><path d="M9 5.2V12.8M5.2 9H12.8" stroke="#1c2733" stroke-width="1.7" stroke-linecap="round"/></svg><div style="position:absolute;left:342px;top:233px;width:9px;height:9px;background:#e5484d;border-radius:50%;"></div><div style="position:absolute;left:357.75px;top:234.25px;width:390.5px;height:35.5px;background:#fafafd;border:2px solid #d2d4e1;border-radius:5px;box-shadow:0 1px 2px rgba(40,50,80,.06);"></div><div style="position:absolute;left:636.2px;top:236px;width:1px;height:32px;background:#d9dbe6;"></div><div style="position:absolute;left:704.3px;top:236px;width:1px;height:32px;background:#d9dbe6;"></div><span class="t" style="left:372.00px;top:244.90px;font-size:15px;line-height:15px;font-weight:400;color:#1c2733;transform:scaleX(0.9563);">steuerberater münchen</span><div style="position:absolute;left:649.5px;top:245px;width:21.5px;height:5px;background:#1a1a1a;border-radius:2px 2px 0 0;"></div><div style="position:absolute;left:649.5px;top:250px;width:21.5px;height:4.7px;background:#dd2c1e;"></div><div style="position:absolute;left:649.5px;top:254.7px;width:21.5px;height:5.4px;background:#ffcb1f;border-radius:0 0 2px 2px;"></div><svg style="position:absolute;left:677.6px;top:246px;" width="12" height="12" viewBox="0 0 12 12"><path d="M-3.6 -1.8L0 1.8L3.6 -1.8" transform="translate(6,6)" fill="none" stroke="#1c2733" stroke-width="1.6" stroke-linecap="round" stroke-linejoin="round"/></svg><svg style="position:absolute;left:716px;top:242px;" width="20" height="20" viewBox="0 0 20 20"><circle cx="8.2" cy="8.2" r="5.6" fill="none" stroke="#1c2733" stroke-width="2"/><path d="M12.4 12.4L17.6 17.6" stroke="#1c2733" stroke-width="2.2" stroke-linecap="round"/></svg><div style="position:absolute;left:1393.75px;top:234.25px;width:190.5px;height:35.5px;background:#fcfcfe;border:2px solid #d6d8e4;border-radius:5px;box-shadow:0 1px 2px rgba(40,50,80,.06);"></div><svg style="position:absolute;left:1408px;top:242px;" width="19" height="20" viewBox="0 0 19 20"><rect x="2" y="3.6" width="15" height="14.4" rx="1.8" fill="none" stroke="#1c2733" stroke-width="1.7"/><path d="M2 4.4A1.8 1.8 0 0 1 3.8 2.8H15.2A1.8 1.8 0 0 1 17 4.4V7.4H2Z" fill="#1c2733"/><path d="M5.6 1.2V4M13.4 1.2V4" stroke="#1c2733" stroke-width="1.8" stroke-linecap="round"/><circle cx="6" cy="11" r="1" fill="#1c2733"/><circle cx="9.5" cy="11" r="1" fill="#1c2733"/><circle cx="13" cy="11" r="1" fill="#1c2733"/></svg><span class="t" style="left:1435.00px;top:244.73px;font-size:14.5px;line-height:14.5px;font-weight:400;color:#1c2733;transform:scaleX(0.9030);">Februar 2025</span><svg style="position:absolute;left:1557.6px;top:246px;" width="12" height="12" viewBox="0 0 12 12"><path d="M-3.6 -1.8L0 1.8L3.6 -1.8" transform="translate(6,6)" fill="none" stroke="#1c2733" stroke-width="1.6" stroke-linecap="round" stroke-linejoin="round"/></svg><div style="position:absolute;left:1595.25px;top:234.25px;width:111.0px;height:35.5px;background:#fcfcfe;border:2px solid #d6d8e4;border-radius:5px;box-shadow:0 1px 2px rgba(40,50,80,.06);"></div><span class="t" style="left:1611.00px;top:244.30px;font-size:15px;line-height:15px;font-weight:400;color:#1c2733;transform:scaleX(0.8963);">€ EUR</span><svg style="position:absolute;left:1679.4px;top:246px;" width="12" height="12" viewBox="0 0 12 12"><path d="M-3.6 -1.8L0 1.8L3.6 -1.8" transform="translate(6,6)" fill="none" stroke="#1c2733" stroke-width="1.6" stroke-linecap="round" stroke-linejoin="round"/></svg><div style="position:absolute;left:1717.75px;top:234.25px;width:165.0px;height:35.5px;background:#fcfcfe;border:2px solid #d6d8e4;border-radius:5px;box-shadow:0 1px 2px rgba(40,50,80,.06);"></div><span class="t" style="left:1730.00px;top:247.27px;font-size:11.5px;line-height:11.5px;font-weight:400;color:#1c2733;transform:scaleX(0.9463);-webkit-text-stroke:0.4px #1c2733;">BULK KEYWORD-ANALYSE</span><div style="position:absolute;left:314px;top:282px;width:1568.7px;height:1px;background:#e6e8ee;"></div><span class="t" style="left:322.70px;top:300.90px;font-size:15px;line-height:15px;font-weight:400;color:#69737f;transform:scaleX(0.9351);">Ähnliche</span><span class="t" style="left:393.00px;top:300.90px;font-size:15px;line-height:15px;font-weight:400;color:#1c2733;transform:scaleX(0.9707);-webkit-text-stroke:0.5px #1c2733;">Verwandte</span><span class="t" style="left:478.00px;top:300.90px;font-size:15px;line-height:15px;font-weight:400;color:#69737f;transform:scaleX(0.8985);">Fragen</span><span class="t" style="left:537.30px;top:300.90px;font-size:15px;line-height:15px;font-weight:400;color:#69737f;transform:scaleX(0.9397);">Long-Tail Keywords</span><div style="position:absolute;left:385px;top:334.8px;width:85.3px;height:2.4px;background:#2f7ab8;"></div><div style="position:absolute;left:313.8px;top:358px;width:1568.2px;height:629px;background:#ffffff;box-shadow:0 0 0 1.5px #f6f7f9;border-radius:4px 4px 0 0;"></div><div style="position:absolute;left:313.8px;top:358px;width:1568.2px;height:80.3px;background:#fafafc;border-bottom:1px solid #ecedf2;border-radius:4px 4px 0 0;"></div><h2 class="t" style="left:335.00px;top:391.07px;font-size:20px;line-height:20px;font-weight:400;color:#1c2733;transform:scaleX(1.0079);">Keywords</h2><span class="t" style="left:431.50px;top:395.30px;font-size:15px;line-height:15px;font-weight:400;color:#4d5763;transform:scaleX(0.9299);">1 - 50 (202)</span><div style="position:absolute;left:1693.75px;top:382.25px;width:53.0px;height:35.5px;background:#fcfcfe;border:2px solid #d6d8e4;border-radius:5px;box-shadow:0 1px 2px rgba(40,50,80,.06);"></div><svg style="position:absolute;left:1704px;top:390px;" width="20" height="20" viewBox="0 0 20 20"><rect x="6.2" y="5.4" width="9.6" height="12.4" rx="1.2" fill="none" stroke="#1c2733" stroke-width="1.7"/><path d="M3.4 14V3.8A1.4 1.4 0 0 1 4.8 2.4H12" fill="none" stroke="#1c2733" stroke-width="1.7"/></svg><svg style="position:absolute;left:1725.5px;top:394px;" width="12" height="12" viewBox="0 0 12 12"><path d="M-3 -1.5L0 1.5L3 -1.5" transform="translate(6,6)" fill="none" stroke="#1c2733" stroke-width="1.6" stroke-linecap="round" stroke-linejoin="round"/></svg><div style="position:absolute;left:1756.75px;top:382.25px;width:48.0px;height:35.5px;background:#fcfcfe;border:2px solid #d6d8e4;border-radius:5px;box-shadow:0 1px 2px rgba(40,50,80,.06);"></div><svg style="position:absolute;left:1771.5px;top:393px;" width="19" height="14" viewBox="0 0 19 14"><rect x="0.4" y="0" width="5" height="14" fill="#1c2733"/><rect x="6.8" y="0" width="5" height="14" fill="#1c2733"/><rect x="13.2" y="0" width="5" height="14" fill="#1c2733"/></svg><div style="position:absolute;left:1814.75px;top:382.25px;width:48.0px;height:35.5px;background:#fcfcfe;border:2px solid #d6d8e4;border-radius:5px;box-shadow:0 1px 2px rgba(40,50,80,.06);"></div><svg style="position:absolute;left:1830px;top:391px;" width="17" height="18" viewBox="0 0 17 18"><path d="M8.5 0.6L15 7.4H11.2V12.4H5.8V7.4H2Z" fill="#1f2a52"/><rect x="2" y="14.6" width="13" height="2.2" fill="#1f2a52"/></svg><div style="position:absolute;left:333.75px;top:459.25px;width:200.5px;height:35.5px;background:#fafafd;border:2px solid #d6d8e4;border-radius:5px;box-shadow:0 1px 2px rgba(40,50,80,.06);"></div><span class="t" style="left:348.00px;top:470.10px;font-size:15px;line-height:15px;font-weight:400;color:#8b949f;transform:scaleX(0.9042);">Suchen</span><svg style="position:absolute;left:507px;top:470px;" width="15" height="15" viewBox="0 0 15 15"><circle cx="6" cy="6" r="4.3" fill="none" stroke="#a9b0ba" stroke-width="1.5"/><path d="M9.2 9.2L13.2 13.2" stroke="#a9b0ba" stroke-width="1.6" stroke-linecap="round"/></svg><div style="position:absolute;left:541.75px;top:459.25px;width:137.5px;height:35.5px;background:#fafafd;border:2px solid #d6d8e4;border-radius:5px;box-shadow:0 1px 2px rgba(40,50,80,.06);"></div><span class="t" style="left:557.00px;top:469.60px;font-size:15px;line-height:15px;font-weight:400;color:#1c2733;transform:scaleX(0.9800);-webkit-text-stroke:0.25px #1c2733;">Schwierigkeit</span><svg style="position:absolute;left:652.9px;top:471.5px;" width="12" height="12" viewBox="0 0 12 12"><path d="M-3.2 -1.6L0 1.6L3.2 -1.6" transform="translate(6,6)" fill="none" stroke="#1c2733" stroke-width="1.7" stroke-linecap="round" stroke-linejoin="round"/></svg><div style="position:absolute;left:686.75px;top:459.25px;width:135.0px;height:35.5px;background:#fafafd;border:2px solid #d6d8e4;border-radius:5px;box-shadow:0 1px 2px rgba(40,50,80,.06);"></div><span class="t" style="left:702.00px;top:469.60px;font-size:15px;line-height:15px;font-weight:400;color:#1c2733;transform:scaleX(0.9353);-webkit-text-stroke:0.25px #1c2733;">Suchvolumen</span><svg style="position:absolute;left:796.7px;top:471.5px;" width="12" height="12" viewBox="0 0 12 12"><path d="M-3.2 -1.6L0 1.6L3.2 -1.6" transform="translate(6,6)" fill="none" stroke="#1c2733" stroke-width="1.7" stroke-linecap="round" stroke-linejoin="round"/></svg><div style="position:absolute;left:829.75px;top:459.25px;width:141.0px;height:35.5px;background:#fafafd;border:2px solid #d6d8e4;border-radius:5px;box-shadow:0 1px 2px rgba(40,50,80,.06);"></div><span class="t" style="left:845.50px;top:469.60px;font-size:15px;line-height:15px;font-weight:400;color:#1c2733;transform:scaleX(0.9541);-webkit-text-stroke:0.25px #1c2733;">Suchintension</span><svg style="position:absolute;left:945px;top:471.5px;" width="12" height="12" viewBox="0 0 12 12"><path d="M-3.2 -1.6L0 1.6L3.2 -1.6" transform="translate(6,6)" fill="none" stroke="#1c2733" stroke-width="1.7" stroke-linecap="round" stroke-linejoin="round"/></svg><div style="position:absolute;left:978.75px;top:459.25px;width:164.5px;height:35.5px;background:#fafafd;border:2px solid #d6d8e4;border-radius:5px;box-shadow:0 1px 2px rgba(40,50,80,.06);"></div><span class="t" style="left:994.40px;top:469.60px;font-size:15px;line-height:15px;font-weight:400;color:#1c2733;transform:scaleX(0.9462);-webkit-text-stroke:0.25px #1c2733;">SERP-Funktionen</span><svg style="position:absolute;left:1117px;top:471.5px;" width="12" height="12" viewBox="0 0 12 12"><path d="M-3.2 -1.6L0 1.6L3.2 -1.6" transform="translate(6,6)" fill="none" stroke="#1c2733" stroke-width="1.7" stroke-linecap="round" stroke-linejoin="round"/></svg><div style="position:absolute;left:1150.25px;top:459.25px;width:107.5px;height:35.5px;background:#fafafd;border:2px solid #d6d8e4;border-radius:5px;box-shadow:0 1px 2px rgba(40,50,80,.06);"></div><span class="t" style="left:1166.00px;top:469.60px;font-size:15px;line-height:15px;font-weight:400;color:#1c2733;transform:scaleX(0.8956);-webkit-text-stroke:0.25px #1c2733;">Relevanz</span><svg style="position:absolute;left:1231.8px;top:471.5px;" width="12" height="12" viewBox="0 0 12 12"><path d="M-3.2 -1.6L0 1.6L3.2 -1.6" transform="translate(6,6)" fill="none" stroke="#1c2733" stroke-width="1.7" stroke-linecap="round" stroke-linejoin="round"/></svg><div style="position:absolute;left:1265.75px;top:459.25px;width:78.0px;height:35.5px;background:#fafafd;border:2px solid #d6d8e4;border-radius:5px;box-shadow:0 1px 2px rgba(40,50,80,.06);"></div><span class="t" style="left:1281.00px;top:469.60px;font-size:15px;line-height:15px;font-weight:400;color:#1c2733;transform:scaleX(0.8525);-webkit-text-stroke:0.25px #1c2733;">CPC</span><svg style="position:absolute;left:1318px;top:471.5px;" width="12" height="12" viewBox="0 0 12 12"><path d="M-3.2 -1.6L0 1.6L3.2 -1.6" transform="translate(6,6)" fill="none" stroke="#1c2733" stroke-width="1.7" stroke-linecap="round" stroke-linejoin="round"/></svg><div style="position:absolute;left:1351.75px;top:459.25px;width:130.5px;height:35.5px;background:#fafafd;border:2px solid #d6d8e4;border-radius:5px;box-shadow:0 1px 2px rgba(40,50,80,.06);"></div><span class="t" style="left:1367.00px;top:469.60px;font-size:15px;line-height:15px;font-weight:400;color:#1c2733;transform:scaleX(0.9968);-webkit-text-stroke:0.25px #1c2733;">Wettbewerb</span><svg style="position:absolute;left:1455.8px;top:471.5px;" width="12" height="12" viewBox="0 0 12 12"><path d="M-3.2 -1.6L0 1.6L3.2 -1.6" transform="translate(6,6)" fill="none" stroke="#1c2733" stroke-width="1.7" stroke-linecap="round" stroke-linejoin="round"/></svg><div style="position:absolute;left:1546px;top:459.5px;width:149.5px;height:35px;background:#1976d2;border-radius:4px;box-shadow:0 2px 4px rgba(25,118,210,.3);"></div><span class="t" style="left:1557.00px;top:472.07px;font-size:11.5px;line-height:11.5px;font-weight:700;color:#ffffff;transform:scaleX(0.9347);">KEYWORD VERWENDEN</span><div style="position:absolute;left:1703.75px;top:459.25px;width:159.0px;height:35.5px;background:#ffffff;border:2px solid #d6d8e4;border-radius:5px;box-shadow:0 1px 2px rgba(40,50,80,.06);"></div><span class="t" style="left:1716.00px;top:472.07px;font-size:11.5px;line-height:11.5px;font-weight:400;color:#1c2733;transform:scaleX(0.9356);-webkit-text-stroke:0.3px #1c2733;">VOREINSTELLUNGEN</span><svg style="position:absolute;left:1837px;top:471.5px;" width="12" height="12" viewBox="0 0 12 12"><path d="M-3.2 -1.6L0 1.6L3.2 -1.6" transform="translate(6,6)" fill="none" stroke="#1c2733" stroke-width="1.7" stroke-linecap="round" stroke-linejoin="round"/></svg><svg style="position:absolute;left:348px;top:513.5px;" width="15" height="15" viewBox="0 0 15 15"><path d="M7.5 1V14M1 7.5H14" stroke="#1c2733" stroke-width="1.8" stroke-linecap="round"/></svg><span class="t" style="left:373.00px;top:516.47px;font-size:11.5px;line-height:11.5px;font-weight:400;color:#1c2733;transform:scaleX(0.9185);-webkit-text-stroke:0.3px #1c2733;">FILTER</span></main>
<section id="results"><div style="position:absolute;left:313.8px;top:561px;width:1568.7px;height:426px;background:#ffffff;"></div><div style="position:absolute;left:313.8px;top:553px;width:1568.7px;height:7px;background:linear-gradient(#ffffff,#f8f9fb);"></div><div style="position:absolute;left:313.8px;top:560px;width:257px;height:427px;background:#fdfdfe;"></div><div style="position:absolute;left:322.5px;top:569px;width:240.5px;height:35.5px;background:#ffffff;border:2px solid #d6d8e4;border-radius:5px;box-shadow:0 1px 2px rgba(40,50,80,.06);"></div><div style="position:absolute;left:324px;top:570.5px;width:99px;height:32.5px;background:#544f7e;border-radius:3.5px 0 0 3.5px;"></div><span class="t" style="left:334.00px;top:581.87px;font-size:11.5px;line-height:11.5px;font-weight:700;color:#ffffff;transform:scaleX(0.9465);">NACH ANZAHL</span><span class="t" style="left:433.00px;top:581.87px;font-size:11.5px;line-height:11.5px;font-weight:400;color:#1c2733;transform:scaleX(0.9502);-webkit-text-stroke:0.3px #1c2733;">NACH SUCHVOLUMEN</span><div style="position:absolute;left:313.8px;top:614px;width:246.5px;height:40px;background:#dfe0ea;"></div><span class="t" style="left:326.70px;top:626.30px;font-size:15px;line-height:15px;font-weight:400;color:#1c2733;transform:scaleX(0.9291);">Alle Keywords</span><span class="t" style="left:524.55px;top:626.30px;font-size:15px;line-height:15px;font-weight:400;color:#7d8692;transform:scaleX(0.9650);">202</span><div style="position:absolute;left:563.5px;top:614px;width:6px;height:373px;background:#f9f9fc;"></div><div style="position:absolute;left:563.5px;top:624px;width:6px;height:256px;background:#c9cad9;border-radius:3px;"></div><svg style="position:absolute;left:563.5px;top:617px;" width="6" height="5" viewBox="0 0 6 5"><path d="M3 0.8L5.4 4.2H0.6Z" fill="#d5d6e2"/></svg><svg style="position:absolute;left:331px;top:668px;" width="10" height="12" viewBox="0 0 10 12"><path d="M3 2L7 6L3 10" fill="none" stroke="#1c2733" stroke-width="1.7" stroke-linecap="round" stroke-linejoin="round"/></svg><span class="t" style="left:354.20px;top:666.30px;font-size:15px;line-height:15px;font-weight:400;color:#1c2733;transform:scaleX(0.9539);">steuerkanzlei</span><span class="t" style="left:533.69px;top:666.30px;font-size:15px;line-height:15px;font-weight:400;color:#7d8692;transform:scaleX(0.9000);">27</span><svg style="position:absolute;left:331px;top:708px;" width="10" height="12" viewBox="0 0 10 12"><path d="M3 2L7 6L3 10" fill="none" stroke="#1c2733" stroke-width="1.7" stroke-linecap="round" stroke-linejoin="round"/></svg><span class="t" style="left:354.20px;top:706.30px;font-size:15px;line-height:15px;font-weight:400;color:#1c2733;transform:scaleX(0.9673);">steuerberatung</span><span class="t" style="left:533.69px;top:706.30px;font-size:15px;line-height:15px;font-weight:400;color:#7d8692;transform:scaleX(0.9000);">13</span><svg style="position:absolute;left:331px;top:748px;" width="10" height="12" viewBox="0 0 10 12"><path d="M3 2L7 6L3 10" fill="none" stroke="#1c2733" stroke-width="1.7" stroke-linecap="round" stroke-linejoin="round"/></svg><span class="t" style="left:354.20px;top:746.30px;font-size:15px;line-height:15px;font-weight:400;color:#1c2733;transform:scaleX(1.0161);">wirtschaftsprüfer</span><span class="t" style="left:541.19px;top:746.30px;font-size:15px;line-height:15px;font-weight:400;color:#7d8692;transform:scaleX(0.9000);">5</span><svg style="position:absolute;left:331px;top:788px;" width="10" height="12" viewBox="0 0 10 12"><path d="M3 2L7 6L3 10" fill="none" stroke="#1c2733" stroke-width="1.7" stroke-linecap="round" stroke-linejoin="round"/></svg><span class="t" style="left:354.20px;top:786.30px;font-size:15px;line-height:15px;font-weight:400;color:#1c2733;transform:scaleX(0.9743);">steuerrecht</span><span class="t" style="left:541.19px;top:786.30px;font-size:15px;line-height:15px;font-weight:400;color:#7d8692;transform:scaleX(0.9000);">5</span><svg style="position:absolute;left:331px;top:828px;" width="10" height="12" viewBox="0 0 10 12"><path d="M3 2L7 6L3 10" fill="none" stroke="#1c2733" stroke-width="1.7" stroke-linecap="round" stroke-linejoin="round"/></svg><span class="t" style="left:354.20px;top:826.30px;font-size:15px;line-height:15px;font-weight:400;color:#1c2733;transform:scaleX(0.9933);">trudering</span><span class="t" style="left:541.19px;top:826.30px;font-size:15px;line-height:15px;font-weight:400;color:#7d8692;transform:scaleX(0.9000);">5</span><svg style="position:absolute;left:331px;top:868px;" width="10" height="12" viewBox="0 0 10 12"><path d="M3 2L7 6L3 10" fill="none" stroke="#1c2733" stroke-width="1.7" stroke-linecap="round" stroke-linejoin="round"/></svg><span class="t" style="left:354.20px;top:866.30px;font-size:15px;line-height:15px;font-weight:400;color:#1c2733;transform:scaleX(0.9717);">ärzte</span><span class="t" style="left:541.19px;top:866.30px;font-size:15px;line-height:15px;font-weight:400;color:#7d8692;transform:scaleX(0.9000);">5</span><svg style="position:absolute;left:331px;top:908px;" width="10" height="12" viewBox="0 0 10 12"><path d="M3 2L7 6L3 10" fill="none" stroke="#1c2733" stroke-width="1.7" stroke-linecap="round" stroke-linejoin="round"/></svg><span class="t" style="left:354.20px;top:906.30px;font-size:15px;line-height:15px;font-weight:400;color:#1c2733;transform:scaleX(0.9605);">steuererklärung</span><span class="t" style="left:541.19px;top:906.30px;font-size:15px;line-height:15px;font-weight:400;color:#7d8692;transform:scaleX(0.9000);">5</span><svg style="position:absolute;left:331px;top:948px;" width="10" height="12" viewBox="0 0 10 12"><path d="M3 2L7 6L3 10" fill="none" stroke="#1c2733" stroke-width="1.7" stroke-linecap="round" stroke-linejoin="round"/></svg><span class="t" style="left:354.20px;top:946.30px;font-size:15px;line-height:15px;font-weight:400;color:#1c2733;transform:scaleX(0.9425);">schwabing</span><span class="t" style="left:541.19px;top:946.30px;font-size:15px;line-height:15px;font-weight:400;color:#7d8692;transform:scaleX(0.9000);">5</span><div style="position:absolute;left:573px;top:561px;width:1309.5px;height:53.5px;background:linear-gradient(#fcfcfd 0,#f8f9fb 7px);"></div><div style="position:absolute;left:571.5px;top:561px;width:1.5px;height:426px;background:#f1f2f6;"></div><div style="position:absolute;left:573px;top:614px;width:1309.5px;height:356px;background:transparent;overflow:hidden;"><div style="position:absolute;left:-573px;top:-614px;width:1886px;height:987px;background:transparent;"><div style="position:absolute;left:573px;top:615px;width:1309.5px;height:43.5px;background:#f2f8fd;border-top:2px solid #cfe2f1;border-bottom:2px solid #c3dcee;"></div><div style="position:absolute;left:594.3px;top:629.3px;width:15.5px;height:15.5px;background:#ffffff;border:2px solid #15181d;border-radius:3.5px;"></div><svg style="position:absolute;left:618.8px;top:628px;" width="18" height="18" viewBox="0 0 18 18"><circle cx="9" cy="9" r="7.8" fill="none" stroke="#5d6670" stroke-width="1.3"/><path d="M9 5.2V12.8M5.2 9H12.8" stroke="#5d6670" stroke-width="1.4" stroke-linecap="round"/></svg><a class="t" style="left:644.20px;top:629.30px;font-size:15px;line-height:15px;font-weight:400;color:#3079b6;transform:scaleX(0.9531);">steuerberater münchen</a><div style="position:absolute;left:1112px;top:625px;width:48px;height:24px;background:#ffffff;border:1.5px solid #8ed161;border-radius:4.5px;"></div><div style="position:absolute;left:1120.8px;top:634.2px;width:6px;height:6px;background:#8ed161;border-radius:50%;"></div><span class="t" style="left:1134.29px;top:628.90px;font-size:15px;line-height:15px;font-weight:400;color:#1c2733;transform:scaleX(0.9000);">35</span><span class="t" style="left:1291.27px;top:628.90px;font-size:15px;line-height:15px;font-weight:400;color:#1c2733;transform:scaleX(0.9150);">6.6K</span><svg style="position:absolute;left:0;top:0" width="1886" height="987"><polygon points="1349.2,647.5 1349.2,627.0 1356.1,632.5 1363.0,632.5 1369.9,626.5 1376.8,632.5 1383.8,632.5 1390.7,632.5 1397.6,640.4 1404.5,636.4 1411.4,636.4 1418.3,640.4 1425.2,643.7 1425.2,647.5" fill="#e4f0fa"/><polyline points="1349.2,627.0 1356.1,632.5 1363.0,632.5 1369.9,626.5 1376.8,632.5 1383.8,632.5 1390.7,632.5 1397.6,640.4 1404.5,636.4 1411.4,636.4 1418.3,640.4 1425.2,643.7" fill="none" stroke="#2f80c4" stroke-width="1.5" stroke-linejoin="round"/></svg><div style="position:absolute;left:1449.2px;top:627.6px;width:19.2px;height:19px;background:#e7d7f1;border-radius:4px;"></div><span class="t" style="left:1456.19px;top:633.28px;font-size:9px;line-height:9px;font-weight:700;color:#3f2d5c;transform:scaleX(0.9500);">L</span><div style="position:absolute;left:1472.9px;top:627.6px;width:19.2px;height:19px;background:#fde8c4;border-radius:4px;"></div><span class="t" style="left:1479.41px;top:633.28px;font-size:9px;line-height:9px;font-weight:700;color:#a56a12;transform:scaleX(0.9500);">C</span><svg style="position:absolute;left:1588.5px;top:628px;" width="13" height="18" viewBox="0 0 13 18"><path d="M6.5 0.6A5.9 5.9 0 0 0 0.6 6.5C0.6 10.8 6.5 17.4 6.5 17.4S12.4 10.8 12.4 6.5A5.9 5.9 0 0 0 6.5 0.6ZM6.5 8.6A2.2 2.2 0 1 1 6.5 4.2A2.2 2.2 0 0 1 6.5 8.6Z" fill="#15191f" fill-rule="evenodd"/></svg><svg style="position:absolute;left:1608.5px;top:628.7px;" width="17" height="16" viewBox="0 0 17 16"><path d="M8.5 0.4L10.6 5.8L16.6 6.1L11.9 9.8L13.5 15.6L8.5 12.3L3.5 15.6L5.1 9.8L0.4 6.1L6.4 5.8Z" fill="#15191f"/></svg><span class="t" style="left:1817.04px;top:628.90px;font-size:15px;line-height:15px;font-weight:400;color:#1c2733;transform:scaleX(0.9300);">–</span><div style="position:absolute;left:573px;top:658.5px;width:1309.5px;height:42px;background:#fafafc;"></div><div style="position:absolute;left:594.3px;top:671.3px;width:15.5px;height:15.5px;background:#ffffff;border:2px solid #15181d;border-radius:3.5px;"></div><svg style="position:absolute;left:618.8px;top:670px;" width="18" height="18" viewBox="0 0 18 18"><circle cx="9" cy="9" r="7.8" fill="none" stroke="#5d6670" stroke-width="1.3"/><path d="M9 5.2V12.8M5.2 9H12.8" stroke="#5d6670" stroke-width="1.4" stroke-linecap="round"/></svg><a class="t" style="left:644.20px;top:671.30px;font-size:15px;line-height:15px;font-weight:400;color:#3079b6;transform:scaleX(0.9793);">wirtschaftsprüfung münchen</a><div style="position:absolute;left:1112px;top:667px;width:48px;height:24px;background:#ffffff;border:1.5px solid #3dab78;border-radius:4.5px;"></div><div style="position:absolute;left:1120.8px;top:676.2px;width:6px;height:6px;background:#3dab78;border-radius:50%;"></div><span class="t" style="left:1134.29px;top:670.90px;font-size:15px;line-height:15px;font-weight:400;color:#1c2733;transform:scaleX(0.9000);">15</span><span class="t" style="left:1294.48px;top:670.90px;font-size:15px;line-height:15px;font-weight:400;color:#1c2733;">480</span><svg style="position:absolute;left:0;top:0" width="1886" height="987"><polygon points="1349.2,689.5 1349.2,675.8 1356.1,681.2 1363.0,681.2 1369.9,675.2 1376.8,681.2 1383.8,668.7 1390.7,676.6 1397.6,685.5 1404.5,685.5 1411.4,675.2 1418.3,680.8 1425.2,681.2 1425.2,689.5" fill="#e4f0fa"/><polyline points="1349.2,675.8 1356.1,681.2 1363.0,681.2 1369.9,675.2 1376.8,681.2 1383.8,668.7 1390.7,676.6 1397.6,685.5 1404.5,685.5 1411.4,675.2 1418.3,680.8 1425.2,681.2" fill="none" stroke="#2f80c4" stroke-width="1.5" stroke-linejoin="round"/></svg><div style="position:absolute;left:1449.2px;top:669.6px;width:19.2px;height:19px;background:#e7d7f1;border-radius:4px;"></div><span class="t" style="left:1456.19px;top:675.28px;font-size:9px;line-height:9px;font-weight:700;color:#3f2d5c;transform:scaleX(0.9500);">L</span><div style="position:absolute;left:1472.9px;top:669.6px;width:19.2px;height:19px;background:#fde8c4;border-radius:4px;"></div><span class="t" style="left:1479.41px;top:675.28px;font-size:9px;line-height:9px;font-weight:700;color:#a56a12;transform:scaleX(0.9500);">C</span><svg style="position:absolute;left:1588.5px;top:670px;" width="13" height="18" viewBox="0 0 13 18"><path d="M6.5 0.6A5.9 5.9 0 0 0 0.6 6.5C0.6 10.8 6.5 17.4 6.5 17.4S12.4 10.8 12.4 6.5A5.9 5.9 0 0 0 6.5 0.6ZM6.5 8.6A2.2 2.2 0 1 1 6.5 4.2A2.2 2.2 0 0 1 6.5 8.6Z" fill="#15191f" fill-rule="evenodd"/></svg><svg style="position:absolute;left:1608.5px;top:670.7px;" width="17" height="16" viewBox="0 0 17 16"><path d="M8.5 0.4L10.6 5.8L16.6 6.1L11.9 9.8L13.5 15.6L8.5 12.3L3.5 15.6L5.1 9.8L0.4 6.1L6.4 5.8Z" fill="#15191f"/></svg><span class="t" style="left:1796.88px;top:670.90px;font-size:15px;line-height:15px;font-weight:400;color:#1c2733;transform:scaleX(0.9300);">14%</span><div style="position:absolute;left:573px;top:700px;width:1309.5px;height:42px;background:#ffffff;"></div><div style="position:absolute;left:594.3px;top:713.3px;width:15.5px;height:15.5px;background:#ffffff;border:2px solid #15181d;border-radius:3.5px;"></div><svg style="position:absolute;left:618.8px;top:712px;" width="18" height="18" viewBox="0 0 18 18"><circle cx="9" cy="9" r="7.8" fill="none" stroke="#5d6670" stroke-width="1.3"/><path d="M9 5.2V12.8M5.2 9H12.8" stroke="#5d6670" stroke-width="1.4" stroke-linecap="round"/></svg><a class="t" style="left:644.20px;top:713.30px;font-size:15px;line-height:15px;font-weight:400;color:#3079b6;transform:scaleX(0.9824);">wirtschaftsprüfer münchen</a><div style="position:absolute;left:1112px;top:709px;width:48px;height:24px;background:#ffffff;border:1.5px solid #3dab78;border-radius:4.5px;"></div><div style="position:absolute;left:1120.8px;top:718.2px;width:6px;height:6px;background:#3dab78;border-radius:50%;"></div><span class="t" style="left:1134.29px;top:712.90px;font-size:15px;line-height:15px;font-weight:400;color:#1c2733;transform:scaleX(0.9000);">19</span><span class="t" style="left:1294.48px;top:712.90px;font-size:15px;line-height:15px;font-weight:400;color:#1c2733;">480</span><svg style="position:absolute;left:0;top:0" width="1886" height="987"><polygon points="1349.2,731.5 1349.2,717.8 1356.1,723.2 1363.0,723.2 1369.9,717.2 1376.8,723.2 1383.8,710.7 1390.7,718.6 1397.6,727.5 1404.5,727.5 1411.4,717.2 1418.3,722.8 1425.2,723.2 1425.2,731.5" fill="#e4f0fa"/><polyline points="1349.2,717.8 1356.1,723.2 1363.0,723.2 1369.9,717.2 1376.8,723.2 1383.8,710.7 1390.7,718.6 1397.6,727.5 1404.5,727.5 1411.4,717.2 1418.3,722.8 1425.2,723.2" fill="none" stroke="#2f80c4" stroke-width="1.5" stroke-linejoin="round"/></svg><div style="position:absolute;left:1449.2px;top:711.6px;width:19.2px;height:19px;background:#e7d7f1;border-radius:4px;"></div><span class="t" style="left:1456.19px;top:717.28px;font-size:9px;line-height:9px;font-weight:700;color:#3f2d5c;transform:scaleX(0.9500);">L</span><div style="position:absolute;left:1472.9px;top:711.6px;width:19.2px;height:19px;background:#fde8c4;border-radius:4px;"></div><span class="t" style="left:1479.41px;top:717.28px;font-size:9px;line-height:9px;font-weight:700;color:#a56a12;transform:scaleX(0.9500);">C</span><svg style="position:absolute;left:1588.5px;top:712px;" width="13" height="18" viewBox="0 0 13 18"><path d="M6.5 0.6A5.9 5.9 0 0 0 0.6 6.5C0.6 10.8 6.5 17.4 6.5 17.4S12.4 10.8 12.4 6.5A5.9 5.9 0 0 0 6.5 0.6ZM6.5 8.6A2.2 2.2 0 1 1 6.5 4.2A2.2 2.2 0 0 1 6.5 8.6Z" fill="#15191f" fill-rule="evenodd"/></svg><svg style="position:absolute;left:1608.5px;top:712.7px;" width="17" height="16" viewBox="0 0 17 16"><path d="M8.5 0.4L10.6 5.8L16.6 6.1L11.9 9.8L13.5 15.6L8.5 12.3L3.5 15.6L5.1 9.8L0.4 6.1L6.4 5.8Z" fill="#15191f"/></svg><span class="t" style="left:1796.88px;top:712.90px;font-size:15px;line-height:15px;font-weight:400;color:#1c2733;transform:scaleX(0.9300);">23%</span><div style="position:absolute;left:573px;top:742px;width:1309.5px;height:42px;background:#fafafc;"></div><div style="position:absolute;left:594.3px;top:755.3px;width:15.5px;height:15.5px;background:#ffffff;border:2px solid #15181d;border-radius:3.5px;"></div><svg style="position:absolute;left:618.8px;top:754px;" width="18" height="18" viewBox="0 0 18 18"><circle cx="9" cy="9" r="7.8" fill="none" stroke="#5d6670" stroke-width="1.3"/><path d="M9 5.2V12.8M5.2 9H12.8" stroke="#5d6670" stroke-width="1.4" stroke-linecap="round"/></svg><a class="t" style="left:644.20px;top:755.30px;font-size:15px;line-height:15px;font-weight:400;color:#3079b6;transform:scaleX(0.9567);">münch steuerberater</a><div style="position:absolute;left:1112px;top:751px;width:48px;height:24px;background:#ffffff;border:1.5px solid #3dab78;border-radius:4.5px;"></div><div style="position:absolute;left:1122.8px;top:760.2px;width:6px;height:6px;background:#3dab78;border-radius:50%;"></div><span class="t" style="left:1140.25px;top:754.90px;font-size:15px;line-height:15px;font-weight:400;color:#1c2733;transform:scaleX(0.9000);">7</span><span class="t" style="left:1294.48px;top:754.90px;font-size:15px;line-height:15px;font-weight:400;color:#1c2733;">260</span><svg style="position:absolute;left:0;top:0" width="1886" height="987"><polygon points="1349.2,773.5 1349.2,761.2 1356.1,752.3 1363.0,761.2 1369.9,752.3 1376.8,764.2 1383.8,764.6 1390.7,764.6 1397.6,764.6 1404.5,761.6 1411.4,764.6 1418.3,769.5 1425.2,767.2 1425.2,773.5" fill="#e4f0fa"/><polyline points="1349.2,761.2 1356.1,752.3 1363.0,761.2 1369.9,752.3 1376.8,764.2 1383.8,764.6 1390.7,764.6 1397.6,764.6 1404.5,761.6 1411.4,764.6 1418.3,769.5 1425.2,767.2" fill="none" stroke="#2f80c4" stroke-width="1.5" stroke-linejoin="round"/></svg><div style="position:absolute;left:1449.2px;top:753.6px;width:19.2px;height:19px;background:#e7d7f1;border-radius:4px;"></div><span class="t" style="left:1456.19px;top:759.28px;font-size:9px;line-height:9px;font-weight:700;color:#3f2d5c;transform:scaleX(0.9500);">L</span><div style="position:absolute;left:1472.9px;top:753.6px;width:19.2px;height:19px;background:#fde8c4;border-radius:4px;"></div><span class="t" style="left:1479.41px;top:759.28px;font-size:9px;line-height:9px;font-weight:700;color:#a56a12;transform:scaleX(0.9500);">C</span><svg style="position:absolute;left:1586.5px;top:754.7px;" width="17" height="16" viewBox="0 0 17 16"><path d="M8.5 0.4L10.6 5.8L16.6 6.1L11.9 9.8L13.5 15.6L8.5 12.3L3.5 15.6L5.1 9.8L0.4 6.1L6.4 5.8Z" fill="#15191f"/></svg><svg style="position:absolute;left:1608px;top:754px;" width="18" height="18" viewBox="0 0 18 18"><rect x="4.4" y="0.8" width="12.8" height="12.8" rx="0.8" fill="#fff" stroke="#15191f" stroke-width="1.5"/><path d="M1 4.4V17H13.6" fill="none" stroke="#15191f" stroke-width="1.5"/><path d="M6.4 11.4L9 8.2L10.8 10.2L12.2 8.8L15 11.4Z" fill="#15191f"/></svg><svg style="position:absolute;left:1630.5px;top:754.5px;" width="17" height="17" viewBox="0 0 17 17"><path d="M1.6 0.6H15.4L16.6 5.2V6.4H0.4V5.2Z" fill="#2d3567"/><rect x="1" y="7.4" width="15" height="9.2" rx="0.8" fill="#2d3567"/><path d="M0.4 6.2H16.6" stroke="#8088b8" stroke-width="0.8" stroke-dasharray="2.4 1"/></svg><span class="t" style="left:1639.07px;top:764.90px;font-size:6.5px;line-height:6.5px;font-weight:700;color:#ffffff;">G</span><span class="t" style="left:1804.64px;top:754.90px;font-size:15px;line-height:15px;font-weight:400;color:#1c2733;transform:scaleX(0.9300);">6%</span><div style="position:absolute;left:573px;top:784px;width:1309.5px;height:42px;background:#ffffff;"></div><div style="position:absolute;left:594.3px;top:797.3px;width:15.5px;height:15.5px;background:#ffffff;border:2px solid #15181d;border-radius:3.5px;"></div><svg style="position:absolute;left:618.8px;top:796px;" width="18" height="18" viewBox="0 0 18 18"><circle cx="9" cy="9" r="7.8" fill="none" stroke="#5d6670" stroke-width="1.3"/><path d="M9 5.2V12.8M5.2 9H12.8" stroke="#5d6670" stroke-width="1.4" stroke-linecap="round"/></svg><a class="t" style="left:644.20px;top:797.30px;font-size:15px;line-height:15px;font-weight:400;color:#3079b6;transform:scaleX(0.9572);">steuerberater münchen privatpersonen</a><div style="position:absolute;left:1112px;top:793px;width:48px;height:24px;background:#ffffff;border:1.5px solid #3dab78;border-radius:4.5px;"></div><div style="position:absolute;left:1122.8px;top:802.2px;width:6px;height:6px;background:#3dab78;border-radius:50%;"></div><span class="t" style="left:1140.25px;top:796.90px;font-size:15px;line-height:15px;font-weight:400;color:#1c2733;transform:scaleX(0.9000);">9</span><span class="t" style="left:1294.48px;top:796.90px;font-size:15px;line-height:15px;font-weight:400;color:#1c2733;">260</span><svg style="position:absolute;left:0;top:0" width="1886" height="987"><polygon points="1349.2,815.5 1349.2,795.0 1356.1,795.0 1363.0,799.3 1369.9,800.9 1376.8,803.8 1383.8,798.9 1390.7,794.5 1397.6,802.8 1404.5,799.5 1411.4,802.8 1418.3,806.4 1425.2,810.7 1425.2,815.5" fill="#e4f0fa"/><polyline points="1349.2,795.0 1356.1,795.0 1363.0,799.3 1369.9,800.9 1376.8,803.8 1383.8,798.9 1390.7,794.5 1397.6,802.8 1404.5,799.5 1411.4,802.8 1418.3,806.4 1425.2,810.7" fill="none" stroke="#2f80c4" stroke-width="1.5" stroke-linejoin="round"/></svg><div style="position:absolute;left:1449.2px;top:795.6px;width:19.2px;height:19px;background:#e7d7f1;border-radius:4px;"></div><span class="t" style="left:1456.19px;top:801.28px;font-size:9px;line-height:9px;font-weight:700;color:#3f2d5c;transform:scaleX(0.9500);">L</span><div style="position:absolute;left:1472.9px;top:795.6px;width:19.2px;height:19px;background:#fde8c4;border-radius:4px;"></div><span class="t" style="left:1479.41px;top:801.28px;font-size:9px;line-height:9px;font-weight:700;color:#a56a12;transform:scaleX(0.9500);">C</span><svg style="position:absolute;left:1588.5px;top:796px;" width="13" height="18" viewBox="0 0 13 18"><path d="M6.5 0.6A5.9 5.9 0 0 0 0.6 6.5C0.6 10.8 6.5 17.4 6.5 17.4S12.4 10.8 12.4 6.5A5.9 5.9 0 0 0 6.5 0.6ZM6.5 8.6A2.2 2.2 0 1 1 6.5 4.2A2.2 2.2 0 0 1 6.5 8.6Z" fill="#15191f" fill-rule="evenodd"/></svg><svg style="position:absolute;left:1608.5px;top:796.7px;" width="17" height="16" viewBox="0 0 17 16"><path d="M8.5 0.4L10.6 5.8L16.6 6.1L11.9 9.8L13.5 15.6L8.5 12.3L3.5 15.6L5.1 9.8L0.4 6.1L6.4 5.8Z" fill="#15191f"/></svg><svg style="position:absolute;left:1631px;top:798.5px;" width="16" height="13" viewBox="0 0 16 13"><path d="M0 1H16M0 4.7H16M0 8.4H16M0 12.1H16" stroke="#15191f" stroke-width="2"/></svg><span class="t" style="left:1796.88px;top:796.90px;font-size:15px;line-height:15px;font-weight:400;color:#1c2733;transform:scaleX(0.9300);">47%</span><div style="position:absolute;left:573px;top:826px;width:1309.5px;height:42px;background:#fafafc;"></div><div style="position:absolute;left:594.3px;top:839.3px;width:15.5px;height:15.5px;background:#ffffff;border:2px solid #15181d;border-radius:3.5px;"></div><svg style="position:absolute;left:618.8px;top:838px;" width="18" height="18" viewBox="0 0 18 18"><circle cx="9" cy="9" r="7.8" fill="none" stroke="#5d6670" stroke-width="1.3"/><path d="M9 5.2V12.8M5.2 9H12.8" stroke="#5d6670" stroke-width="1.4" stroke-linecap="round"/></svg><a class="t" style="left:644.20px;top:839.30px;font-size:15px;line-height:15px;font-weight:400;color:#3079b6;transform:scaleX(0.9531);">münchen steuerberater</a><div style="position:absolute;left:1112px;top:835px;width:48px;height:24px;background:#ffffff;border:1.5px solid #3dab78;border-radius:4.5px;"></div><div style="position:absolute;left:1120.8px;top:844.2px;width:6px;height:6px;background:#3dab78;border-radius:50%;"></div><span class="t" style="left:1134.29px;top:838.90px;font-size:15px;line-height:15px;font-weight:400;color:#1c2733;transform:scaleX(0.9000);">18</span><span class="t" style="left:1294.48px;top:838.90px;font-size:15px;line-height:15px;font-weight:400;color:#1c2733;">260</span><svg style="position:absolute;left:0;top:0" width="1886" height="987"><polygon points="1349.2,857.5 1349.2,845.2 1356.1,836.3 1363.0,845.2 1369.9,836.3 1376.8,848.2 1383.8,848.6 1390.7,848.6 1397.6,848.6 1404.5,845.6 1411.4,848.6 1418.3,853.5 1425.2,851.2 1425.2,857.5" fill="#e4f0fa"/><polyline points="1349.2,845.2 1356.1,836.3 1363.0,845.2 1369.9,836.3 1376.8,848.2 1383.8,848.6 1390.7,848.6 1397.6,848.6 1404.5,845.6 1411.4,848.6 1418.3,853.5 1425.2,851.2" fill="none" stroke="#2f80c4" stroke-width="1.5" stroke-linejoin="round"/></svg><div style="position:absolute;left:1449.2px;top:837.6px;width:19.2px;height:19px;background:#e7d7f1;border-radius:4px;"></div><span class="t" style="left:1456.19px;top:843.28px;font-size:9px;line-height:9px;font-weight:700;color:#3f2d5c;transform:scaleX(0.9500);">L</span><div style="position:absolute;left:1472.9px;top:837.6px;width:19.2px;height:19px;background:#fde8c4;border-radius:4px;"></div><span class="t" style="left:1479.41px;top:843.28px;font-size:9px;line-height:9px;font-weight:700;color:#a56a12;transform:scaleX(0.9500);">C</span><svg style="position:absolute;left:1588.5px;top:838px;" width="13" height="18" viewBox="0 0 13 18"><path d="M6.5 0.6A5.9 5.9 0 0 0 0.6 6.5C0.6 10.8 6.5 17.4 6.5 17.4S12.4 10.8 12.4 6.5A5.9 5.9 0 0 0 6.5 0.6ZM6.5 8.6A2.2 2.2 0 1 1 6.5 4.2A2.2 2.2 0 0 1 6.5 8.6Z" fill="#15191f" fill-rule="evenodd"/></svg><svg style="position:absolute;left:1608.5px;top:838.7px;" width="17" height="16" viewBox="0 0 17 16"><path d="M8.5 0.4L10.6 5.8L16.6 6.1L11.9 9.8L13.5 15.6L8.5 12.3L3.5 15.6L5.1 9.8L0.4 6.1L6.4 5.8Z" fill="#15191f"/></svg><svg style="position:absolute;left:1631px;top:840.5px;" width="16" height="13" viewBox="0 0 16 13"><path d="M0 1H16M0 4.7H16M0 8.4H16M0 12.1H16" stroke="#15191f" stroke-width="2"/></svg><span class="t" style="left:1796.88px;top:838.90px;font-size:15px;line-height:15px;font-weight:400;color:#1c2733;transform:scaleX(0.9300);">81%</span><div style="position:absolute;left:573px;top:868px;width:1309.5px;height:42px;background:#ffffff;"></div><div style="position:absolute;left:594.3px;top:881.3px;width:15.5px;height:15.5px;background:#ffffff;border:2px solid #15181d;border-radius:3.5px;"></div><svg style="position:absolute;left:618.8px;top:880px;" width="18" height="18" viewBox="0 0 18 18"><circle cx="9" cy="9" r="7.8" fill="none" stroke="#5d6670" stroke-width="1.3"/><path d="M9 5.2V12.8M5.2 9H12.8" stroke="#5d6670" stroke-width="1.4" stroke-linecap="round"/></svg><a class="t" style="left:644.20px;top:881.30px;font-size:15px;line-height:15px;font-weight:400;color:#3079b6;transform:scaleX(0.9586);">anwalt für steuerrecht münchen</a><div style="position:absolute;left:1112px;top:877px;width:48px;height:24px;background:#ffffff;border:1.5px solid #3dab78;border-radius:4.5px;"></div><div style="position:absolute;left:1122.8px;top:886.2px;width:6px;height:6px;background:#3dab78;border-radius:50%;"></div><span class="t" style="left:1140.25px;top:880.90px;font-size:15px;line-height:15px;font-weight:400;color:#1c2733;transform:scaleX(0.9000);">4</span><span class="t" style="left:1294.48px;top:880.90px;font-size:15px;line-height:15px;font-weight:400;color:#1c2733;">260</span><svg style="position:absolute;left:0;top:0" width="1886" height="987"><polygon points="1349.2,899.5 1349.2,878.6 1356.1,888.8 1363.0,884.4 1369.9,884.4 1376.8,884.4 1383.8,888.8 1390.7,888.8 1397.6,884.4 1404.5,888.8 1411.4,888.8 1418.3,888.8 1425.2,895.4 1425.2,899.5" fill="#e4f0fa"/><polyline points="1349.2,878.6 1356.1,888.8 1363.0,884.4 1369.9,884.4 1376.8,884.4 1383.8,888.8 1390.7,888.8 1397.6,884.4 1404.5,888.8 1411.4,888.8 1418.3,888.8 1425.2,895.4" fill="none" stroke="#2f80c4" stroke-width="1.5" stroke-linejoin="round"/></svg><div style="position:absolute;left:1449.2px;top:879.6px;width:19.2px;height:19px;background:#e7d7f1;border-radius:4px;"></div><span class="t" style="left:1456.19px;top:885.28px;font-size:9px;line-height:9px;font-weight:700;color:#3f2d5c;transform:scaleX(0.9500);">L</span><div style="position:absolute;left:1472.9px;top:879.6px;width:19.2px;height:19px;background:#fbd3d3;border-radius:4px;"></div><span class="t" style="left:1479.41px;top:885.28px;font-size:9px;line-height:9px;font-weight:700;color:#b3261e;transform:scaleX(0.9500);">N</span><svg style="position:absolute;left:1588.5px;top:880px;" width="13" height="18" viewBox="0 0 13 18"><path d="M6.5 0.6A5.9 5.9 0 0 0 0.6 6.5C0.6 10.8 6.5 17.4 6.5 17.4S12.4 10.8 12.4 6.5A5.9 5.9 0 0 0 6.5 0.6ZM6.5 8.6A2.2 2.2 0 1 1 6.5 4.2A2.2 2.2 0 0 1 6.5 8.6Z" fill="#15191f" fill-rule="evenodd"/></svg><svg style="position:absolute;left:1608.5px;top:880.7px;" width="17" height="16" viewBox="0 0 17 16"><path d="M8.5 0.4L10.6 5.8L16.6 6.1L11.9 9.8L13.5 15.6L8.5 12.3L3.5 15.6L5.1 9.8L0.4 6.1L6.4 5.8Z" fill="#15191f"/></svg><svg style="position:absolute;left:1631px;top:882.5px;" width="16" height="13" viewBox="0 0 16 13"><path d="M0 1.2H16" stroke="#15191f" stroke-width="2.4"/><path d="M0 5H7M9 5H16M0 8.5H7M9 8.5H16M0 12H7M9 12H16" stroke="#15191f" stroke-width="2"/></svg><div style="position:absolute;left:1654.4px;top:879.4px;width:19.2px;height:19.2px;background:#ffffff;border:1.6px solid #d3d5e0;border-radius:4.5px;"></div><svg style="position:absolute;left:1659px;top:887.5px;" width="10" height="3" viewBox="0 0 10 3"><circle cx="1.5" cy="1.5" r="1.2" fill="#15191f"/><circle cx="5" cy="1.5" r="1.2" fill="#15191f"/><circle cx="8.5" cy="1.5" r="1.2" fill="#15191f"/></svg><span class="t" style="left:1804.64px;top:880.90px;font-size:15px;line-height:15px;font-weight:400;color:#1c2733;transform:scaleX(0.9300);">6%</span><div style="position:absolute;left:573px;top:910px;width:1309.5px;height:42px;background:#fafafc;"></div><div style="position:absolute;left:594.3px;top:923.3px;width:15.5px;height:15.5px;background:#ffffff;border:2px solid #15181d;border-radius:3.5px;"></div><svg style="position:absolute;left:618.8px;top:922px;" width="18" height="18" viewBox="0 0 18 18"><circle cx="9" cy="9" r="7.8" fill="none" stroke="#5d6670" stroke-width="1.3"/><path d="M9 5.2V12.8M5.2 9H12.8" stroke="#5d6670" stroke-width="1.4" stroke-linecap="round"/></svg><a class="t" style="left:644.20px;top:923.30px;font-size:15px;line-height:15px;font-weight:400;color:#3079b6;transform:scaleX(0.9489);">steuerberater münchen günstig</a><div style="position:absolute;left:1112px;top:919px;width:48px;height:24px;background:#ffffff;border:1.5px solid #3dab78;border-radius:4.5px;"></div><div style="position:absolute;left:1120.8px;top:928.2px;width:6px;height:6px;background:#3dab78;border-radius:50%;"></div><span class="t" style="left:1134.29px;top:922.90px;font-size:15px;line-height:15px;font-weight:400;color:#1c2733;transform:scaleX(0.9000);">13</span><span class="t" style="left:1294.48px;top:922.90px;font-size:15px;line-height:15px;font-weight:400;color:#1c2733;">210</span><svg style="position:absolute;left:0;top:0" width="1886" height="987"><polygon points="1349.2,941.5 1349.2,920.7 1356.1,929.6 1363.0,927.4 1369.9,928.7 1376.8,933.1 1383.8,933.1 1390.7,930.5 1397.6,933.1 1404.5,936.2 1411.4,933.1 1418.3,936.2 1425.2,938.4 1425.2,941.5" fill="#e4f0fa"/><polyline points="1349.2,920.7 1356.1,929.6 1363.0,927.4 1369.9,928.7 1376.8,933.1 1383.8,933.1 1390.7,930.5 1397.6,933.1 1404.5,936.2 1411.4,933.1 1418.3,936.2 1425.2,938.4" fill="none" stroke="#2f80c4" stroke-width="1.5" stroke-linejoin="round"/></svg><div style="position:absolute;left:1449.2px;top:921.6px;width:19.2px;height:19px;background:#e7d7f1;border-radius:4px;"></div><span class="t" style="left:1456.19px;top:927.28px;font-size:9px;line-height:9px;font-weight:700;color:#3f2d5c;transform:scaleX(0.9500);">L</span><div style="position:absolute;left:1472.9px;top:921.6px;width:19.2px;height:19px;background:#fde8c4;border-radius:4px;"></div><span class="t" style="left:1479.41px;top:927.28px;font-size:9px;line-height:9px;font-weight:700;color:#a56a12;transform:scaleX(0.9500);">C</span><svg style="position:absolute;left:1588.5px;top:922px;" width="13" height="18" viewBox="0 0 13 18"><path d="M6.5 0.6A5.9 5.9 0 0 0 0.6 6.5C0.6 10.8 6.5 17.4 6.5 17.4S12.4 10.8 12.4 6.5A5.9 5.9 0 0 0 6.5 0.6ZM6.5 8.6A2.2 2.2 0 1 1 6.5 4.2A2.2 2.2 0 0 1 6.5 8.6Z" fill="#15191f" fill-rule="evenodd"/></svg><svg style="position:absolute;left:1608.5px;top:922.7px;" width="17" height="16" viewBox="0 0 17 16"><path d="M8.5 0.4L10.6 5.8L16.6 6.1L11.9 9.8L13.5 15.6L8.5 12.3L3.5 15.6L5.1 9.8L0.4 6.1L6.4 5.8Z" fill="#15191f"/></svg><svg style="position:absolute;left:1631px;top:924.5px;" width="16" height="13" viewBox="0 0 16 13"><path d="M0 1H16M0 4.7H16M0 8.4H16M0 12.1H16" stroke="#15191f" stroke-width="2"/></svg><span class="t" style="left:1796.88px;top:922.90px;font-size:15px;line-height:15px;font-weight:400;color:#1c2733;transform:scaleX(0.9300);">37%</span><div style="position:absolute;left:573px;top:952px;width:1309.5px;height:42px;background:#ffffff;"></div><div style="position:absolute;left:594.3px;top:965.3px;width:15.5px;height:15.5px;background:#ffffff;border:2px solid #15181d;border-radius:3.5px;"></div><svg style="position:absolute;left:618.8px;top:964px;" width="18" height="18" viewBox="0 0 18 18"><circle cx="9" cy="9" r="7.8" fill="none" stroke="#5d6670" stroke-width="1.3"/><path d="M9 5.2V12.8M5.2 9H12.8" stroke="#5d6670" stroke-width="1.4" stroke-linecap="round"/></svg><a class="t" style="left:644.20px;top:965.30px;font-size:15px;line-height:15px;font-weight:400;color:#3079b6;transform:scaleX(0.9489);">steuerberater münchen günstig</a><div style="position:absolute;left:1112px;top:961px;width:48px;height:24px;background:#ffffff;border:1.5px solid #3dab78;border-radius:4.5px;"></div><div style="position:absolute;left:1122.8px;top:970.2px;width:6px;height:6px;background:#3dab78;border-radius:50%;"></div><span class="t" style="left:1140.25px;top:964.90px;font-size:15px;line-height:15px;font-weight:400;color:#1c2733;transform:scaleX(0.9000);">9</span><span class="t" style="left:1294.48px;top:964.90px;font-size:15px;line-height:15px;font-weight:400;color:#1c2733;">210</span><svg style="position:absolute;left:0;top:0" width="1886" height="987"><polygon points="1349.2,983.5 1349.2,962.8 1356.1,969.5 1363.0,969.4 1369.9,970.7 1376.8,975.1 1383.8,975.1 1390.7,972.5 1397.6,975.1 1404.5,978.2 1411.4,975.1 1418.3,978.2 1425.2,980.4 1425.2,983.5" fill="#e4f0fa"/><polyline points="1349.2,962.8 1356.1,969.5 1363.0,969.4 1369.9,970.7 1376.8,975.1 1383.8,975.1 1390.7,972.5 1397.6,975.1 1404.5,978.2 1411.4,975.1 1418.3,978.2 1425.2,980.4" fill="none" stroke="#2f80c4" stroke-width="1.5" stroke-linejoin="round"/></svg><div style="position:absolute;left:1449.2px;top:963.6px;width:19.2px;height:19px;background:#d5e8f8;border-radius:4px;"></div><span class="t" style="left:1457.61px;top:969.28px;font-size:9px;line-height:9px;font-weight:700;color:#1f5f99;transform:scaleX(0.9500);">I</span><svg style="position:absolute;left:1586.5px;top:964.7px;" width="17" height="16" viewBox="0 0 17 16"><path d="M8.5 0.4L10.6 5.8L16.6 6.1L11.9 9.8L13.5 15.6L8.5 12.3L3.5 15.6L5.1 9.8L0.4 6.1L6.4 5.8Z" fill="#15191f"/></svg><svg style="position:absolute;left:1609px;top:966.5px;" width="16" height="13" viewBox="0 0 16 13"><path d="M0 1H16M0 4.7H16M0 8.4H16M0 12.1H16" stroke="#15191f" stroke-width="2"/></svg><span class="t" style="left:1796.88px;top:964.90px;font-size:15px;line-height:15px;font-weight:400;color:#1c2733;transform:scaleX(0.9300);">34%</span><div style="position:absolute;left:1065.8px;top:658px;width:1.5px;height:330px;background:#f5f6f9;"></div><div style="position:absolute;left:1202px;top:658px;width:1.5px;height:330px;background:#f5f6f9;"></div><div style="position:absolute;left:1336px;top:658px;width:1.5px;height:330px;background:#f5f6f9;"></div><div style="position:absolute;left:1436.8px;top:658px;width:1.5px;height:330px;background:#f5f6f9;"></div><div style="position:absolute;left:1572px;top:658px;width:1.5px;height:330px;background:#f5f6f9;"></div><div style="position:absolute;left:1706.4px;top:658px;width:1.5px;height:330px;background:#f5f6f9;"></div><div style="position:absolute;left:1842.4px;top:658px;width:1.5px;height:330px;background:#f5f6f9;"></div></div></div><div style="position:absolute;left:1066.05px;top:565px;width:1.5px;height:49px;background:#ffffff;"></div><div style="position:absolute;left:1202.25px;top:565px;width:1.5px;height:49px;background:#ffffff;"></div><div style="position:absolute;left:1336.25px;top:565px;width:1.5px;height:49px;background:#ffffff;"></div><div style="position:absolute;left:1437.05px;top:565px;width:1.5px;height:49px;background:#ffffff;"></div><div style="position:absolute;left:1572.25px;top:565px;width:1.5px;height:49px;background:#ffffff;"></div><div style="position:absolute;left:1706.65px;top:565px;width:1.5px;height:49px;background:#ffffff;"></div><div style="position:absolute;left:1842.65px;top:565px;width:1.5px;height:49px;background:#ffffff;"></div><div style="position:absolute;left:594.3px;top:581.2px;width:15.5px;height:15.5px;background:#ffffff;border:2px solid #15181d;border-radius:3.5px;"></div><span class="t" style="left:622.40px;top:583.69px;font-size:11px;line-height:11px;font-weight:700;color:#56616d;transform:scaleX(1.0201);">KEYWORD</span><span class="t" style="left:1088.00px;top:583.69px;font-size:11px;line-height:11px;font-weight:700;color:#56616d;transform:scaleX(1.0213);">SCHWIERIGKEIT</span><span class="t" style="left:1226.40px;top:583.69px;font-size:11px;line-height:11px;font-weight:700;color:#56616d;transform:scaleX(1.0398);">SUCHVOLUMEN</span><svg style="position:absolute;left:1322px;top:584px;" width="10" height="10" viewBox="0 0 10 10"><path d="M2 3.4L5 6.4L8 3.4" fill="none" stroke="#56616d" stroke-width="1.4" stroke-linecap="round" stroke-linejoin="round"/></svg><span class="t" style="left:1349.00px;top:583.69px;font-size:11px;line-height:11px;font-weight:700;color:#56616d;transform:scaleX(1.0109);">TREND</span><span class="t" style="left:1448.50px;top:583.69px;font-size:11px;line-height:11px;font-weight:700;color:#56616d;transform:scaleX(1.0377);">SUCHINTENSION</span><span class="t" style="left:1583.70px;top:583.69px;font-size:11px;line-height:11px;font-weight:700;color:#56616d;transform:scaleX(1.0178);">SERP-FUNKTIO...</span><span class="t" style="left:1761.40px;top:583.69px;font-size:11px;line-height:11px;font-weight:700;color:#56616d;transform:scaleX(1.0092);">RELEVANZ</span><div style="position:absolute;left:573px;top:970px;width:1309.5px;height:17px;background:#f3f3f8;"></div><div style="position:absolute;left:591px;top:971.5px;width:1020px;height:13.5px;background:#d6d7e3;"></div><svg style="position:absolute;left:577px;top:975.5px;" width="8" height="8" viewBox="0 0 8 8"><path d="M6 0.6L1.6 4L6 7.4Z" fill="#c3c5d3"/></svg><svg style="position:absolute;left:1870px;top:975.5px;" width="8" height="8" viewBox="0 0 8 8"><path d="M2 0.6L6.4 4L2 7.4Z" fill="#c3c5d3"/></svg><div style="position:absolute;left:1813.5px;top:873px;width:64px;height:64px;background:#0f6ffb;border-radius:50%;box-shadow:0 4px 12px rgba(20,60,140,.22);"></div><svg style="position:absolute;left:1829px;top:889px;" width="34" height="32" viewBox="0 0 34 32"><rect x="0.6" y="6" width="33" height="16.5" rx="8.2" fill="#fff"/><path d="M20.5 24.5H27.5L27 30.5Z" fill="#fff"/></svg><div style="position:absolute;left:1882px;top:337.5px;width:4px;height:650px;background:#f3f4f7;"></div></section>
</body></html>
